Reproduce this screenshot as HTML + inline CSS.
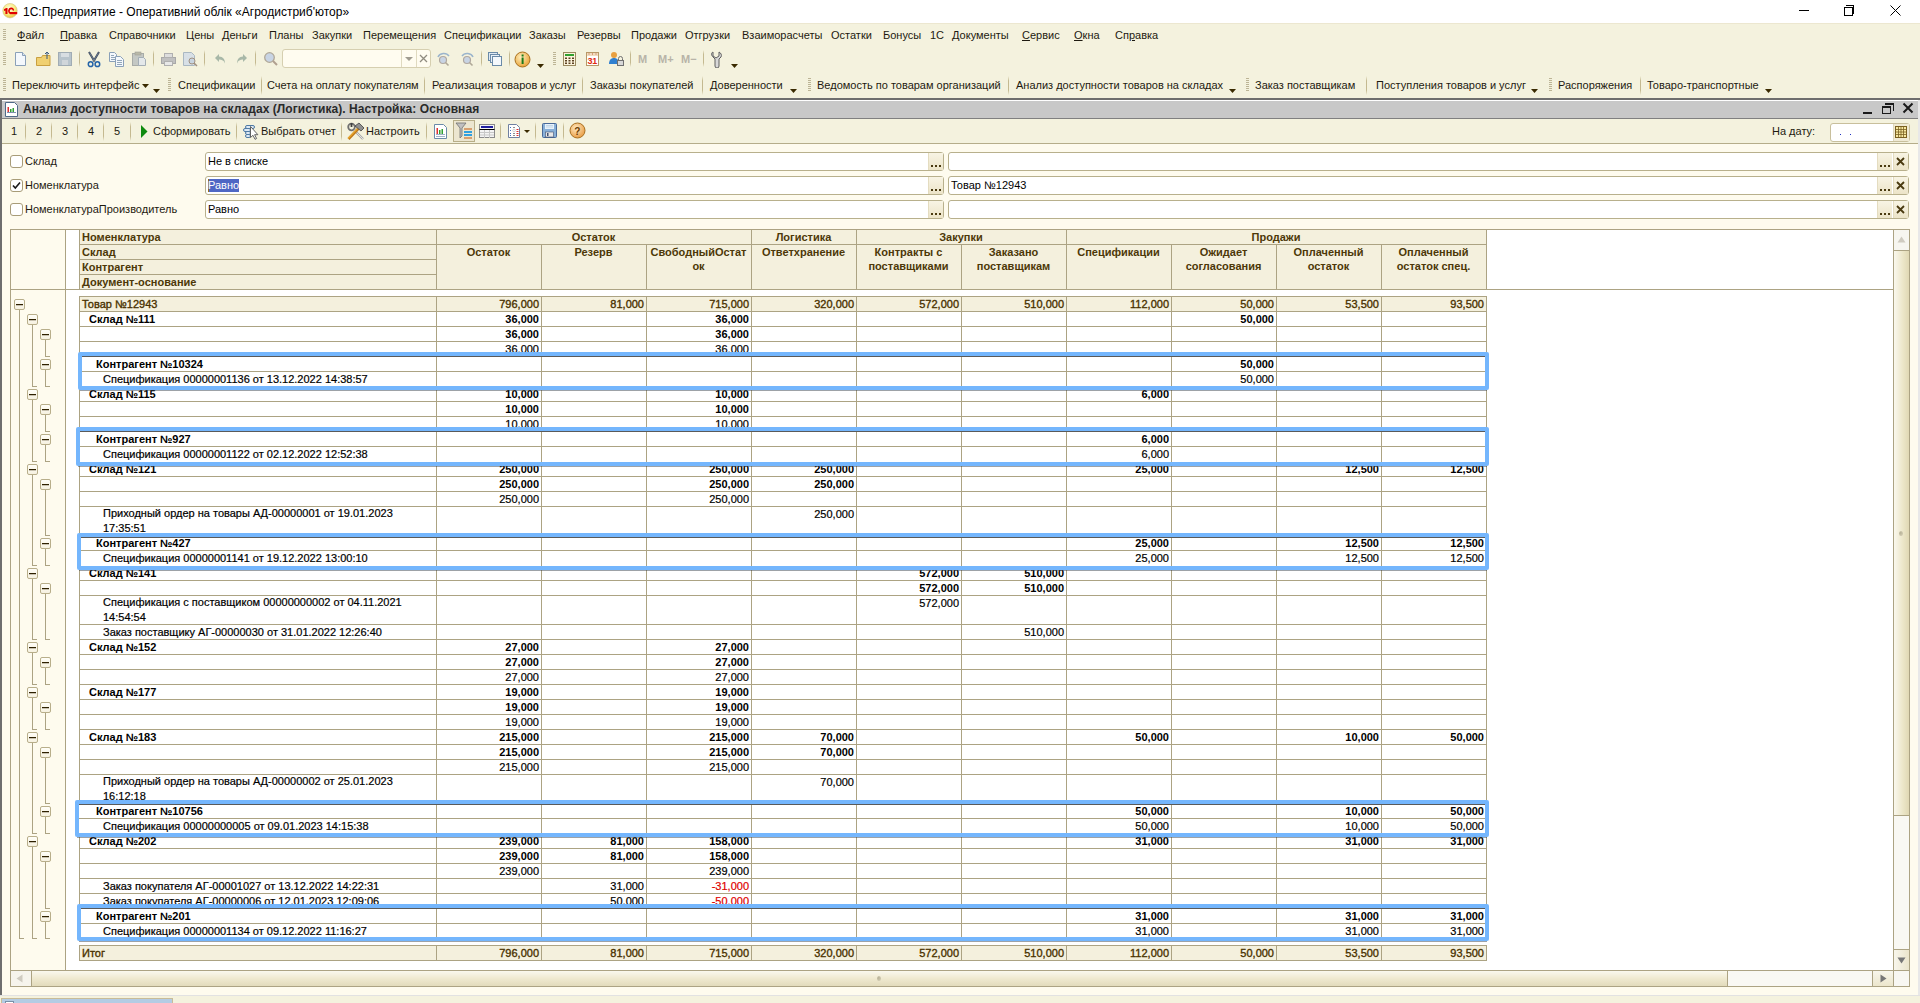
<!DOCTYPE html><html><head><meta charset="utf-8"><style>
*{margin:0;padding:0;box-sizing:border-box}
html,body{width:1920px;height:1003px;overflow:hidden;background:#f4f2de;font-family:"Liberation Sans",sans-serif;font-size:11px;color:#1a1a1a}
div,span,svg{position:absolute}
.t{white-space:nowrap;line-height:15px;height:15px}
.tb .t,.tb span{padding-top:1px}
.tb span:not([style*="bold"]){-webkit-text-stroke:0.2px currentColor}
.b{font-weight:bold}
.r{text-align:right}
.c{text-align:center}
</style></head><body>
<div style="left:0px;top:0px;width:1920px;height:23px;background:#fff"></div><svg style="left:0px;top:0px" width="20" height="20"><defs><radialGradient id="g1" cx="45%" cy="35%" r="65%"><stop offset="0" stop-color="#fffde8"/><stop offset="0.6" stop-color="#f8ec80"/><stop offset="1" stop-color="#e8c040"/></radialGradient></defs><circle cx="10" cy="10.7" r="7.2" fill="url(#g1)" stroke="#d8c890" stroke-width="0.7"/><path d="M4 9.2L6.2 8h1.3v6H5.4v-3.6l-1.4 0.6z" fill="#e00000"/><path d="M10 13.2C8.3 12.2 8.6 8.6 11 8.4c1.6-0.1 2.6 1 2.2 2.2" stroke="#e00000" stroke-width="1.7" fill="none"/><rect x="10" y="12" width="7.2" height="2.2" fill="#e00000"/></svg><span class="t" style="left:23px;top:5px;font-size:12px;color:#000">1С:Предприятие - Оперативний облік «Агродистриб'ютор»</span><div style="left:1799px;top:10px;width:10px;height:1px;background:#000"></div><div style="left:1844px;top:7px;width:9px;height:9px;border:1px solid #000;background:#fff"></div><div style="left:1846px;top:5px;width:8px;height:1px;background:#000"></div><div style="left:1853px;top:5px;width:1px;height:9px;background:#000"></div><svg style="left:1890px;top:5px" width="11" height="11"><path d="M0.5 0.5L10.5 10.5M10.5 0.5L0.5 10.5" stroke="#000" stroke-width="1"/></svg><div style="left:0px;top:23px;width:1920px;height:75px;background:#f4f2de"></div><div style="left:0px;top:23px;width:1920px;height:1px;background:#ece7d0"></div><div style="left:3px;top:29px;width:3px;height:1px;background:#bcb495"></div><div style="left:3px;top:31px;width:3px;height:1px;background:#bcb495"></div><div style="left:3px;top:33px;width:3px;height:1px;background:#bcb495"></div><div style="left:3px;top:35px;width:3px;height:1px;background:#bcb495"></div><div style="left:3px;top:37px;width:3px;height:1px;background:#bcb495"></div><div style="left:3px;top:39px;width:3px;height:1px;background:#bcb495"></div><span class="t" style="left:17px;top:28px;color:#1e1a10"><u>Ф</u>айл</span><span class="t" style="left:60px;top:28px;color:#1e1a10"><u>П</u>равка</span><span class="t" style="left:109px;top:28px;color:#1e1a10">Справочники</span><span class="t" style="left:186px;top:28px;color:#1e1a10">Цены</span><span class="t" style="left:222px;top:28px;color:#1e1a10">Деньги</span><span class="t" style="left:269px;top:28px;color:#1e1a10">Планы</span><span class="t" style="left:312px;top:28px;color:#1e1a10">Закупки</span><span class="t" style="left:363px;top:28px;color:#1e1a10">Перемещения</span><span class="t" style="left:444px;top:28px;color:#1e1a10">Спецификации</span><span class="t" style="left:529px;top:28px;color:#1e1a10">Заказы</span><span class="t" style="left:577px;top:28px;color:#1e1a10">Резервы</span><span class="t" style="left:631px;top:28px;color:#1e1a10">Продажи</span><span class="t" style="left:685px;top:28px;color:#1e1a10">Отгрузки</span><span class="t" style="left:742px;top:28px;color:#1e1a10">Взаиморасчеты</span><span class="t" style="left:831px;top:28px;color:#1e1a10">Остатки</span><span class="t" style="left:883px;top:28px;color:#1e1a10">Бонусы</span><span class="t" style="left:930px;top:28px;color:#1e1a10">1С</span><span class="t" style="left:952px;top:28px;color:#1e1a10">Документы</span><span class="t" style="left:1022px;top:28px;color:#1e1a10"><u>С</u>ервис</span><span class="t" style="left:1074px;top:28px;color:#1e1a10"><u>О</u>кна</span><span class="t" style="left:1115px;top:28px;color:#1e1a10">Сп<u>р</u>авка</span><div style="left:3px;top:52px;width:3px;height:1px;background:#bcb495"></div><div style="left:3px;top:54px;width:3px;height:1px;background:#bcb495"></div><div style="left:3px;top:56px;width:3px;height:1px;background:#bcb495"></div><div style="left:3px;top:58px;width:3px;height:1px;background:#bcb495"></div><div style="left:3px;top:60px;width:3px;height:1px;background:#bcb495"></div><div style="left:3px;top:62px;width:3px;height:1px;background:#bcb495"></div><div style="left:3px;top:64px;width:3px;height:1px;background:#bcb495"></div><svg style="left:13px;top:51px" width="16" height="16"><path d="M2.5 1.5h7l3 3v10h-10z" fill="#f4f8fc" stroke="#8aa0b8"/><path d="M9.5 1.5v3h3" fill="#dde6ef" stroke="#8aa0b8"/></svg><svg style="left:35px;top:51px" width="17" height="16"><path d="M1.5 6.5h5l1-2h7.5v10h-13.5z" fill="#f0d070" stroke="#c9a040"/><path d="M12 1v7M10 3l2-2 2 2" stroke="#3a5a80" fill="none"/></svg><svg style="left:57px;top:51px" width="16" height="16"><rect x="1.5" y="1.5" width="13" height="13" fill="#b8c4cc" stroke="#a0acb4"/><rect x="4" y="2" width="8" height="4" fill="#d8dee2"/><rect x="5" y="9" width="6" height="5" fill="#d0d6da"/></svg><div style="left:79px;top:50px;width:1px;height:17px;background:linear-gradient(180deg,rgba(190,180,140,0),#c4b990 25%,#c4b990 75%,rgba(190,180,140,0))"></div><svg style="left:87px;top:51px" width="14" height="17"><path d="M2 1l5.6 9.5M12 1L6.4 10.5" stroke="#3a4658" stroke-width="2"/><path d="M2.4 1.5l5 8.5M11.6 1.5l-5 8.5" stroke="#8aa0b8" stroke-width="0.6"/><ellipse cx="3.6" cy="13.2" rx="2.3" ry="2.4" fill="none" stroke="#2464a8" stroke-width="1.5"/><ellipse cx="10.4" cy="13.2" rx="2.3" ry="2.4" fill="none" stroke="#2464a8" stroke-width="1.5"/></svg><svg style="left:108px;top:51px" width="17" height="16"><path d="M1.5 1.5h5l2 2v7h-7z" fill="#f4f8fc" stroke="#8aa0b8"/><path d="M3 4.5h3M3 6.5h4M3 8.5h4" stroke="#7890a8" stroke-width="0.8"/><path d="M7.5 5.5h5l3 3v7h-8z" fill="#f4f8fc" stroke="#8aa0b8"/><path d="M9 9.5h5M9 11.5h5M9 13.5h5" stroke="#7890a8" stroke-width="0.8"/></svg><svg style="left:131px;top:51px" width="17" height="16"><rect x="1.5" y="2.5" width="11" height="12" fill="#c4c8c4" stroke="#a8aca8"/><rect x="4" y="1" width="6" height="3" fill="#b8b8a8" stroke="#a0a098" stroke-width="0.6"/><path d="M7.5 6.5h5l2 2v6h-7z" fill="#e4e8ea" stroke="#a4aeb6"/></svg><div style="left:153px;top:50px;width:1px;height:17px;background:linear-gradient(180deg,rgba(190,180,140,0),#c4b990 25%,#c4b990 75%,rgba(190,180,140,0))"></div><svg style="left:160px;top:51px" width="17" height="16"><rect x="1.5" y="6.5" width="14" height="6" fill="#c0c0c0" stroke="#a8a8a8"/><rect x="4.5" y="2.5" width="8" height="4" fill="#ddd" stroke="#b0b0b0"/><rect x="4.5" y="10.5" width="8" height="4" fill="#e8e8e8" stroke="#b0b0b0"/></svg><svg style="left:182px;top:51px" width="17" height="16"><path d="M1.5 1.5h8l3 3v10h-11z" fill="#d8e0e6" stroke="#aab8c2"/><circle cx="10" cy="10" r="3" fill="#c8d4e0" stroke="#a09080"/><path d="M12 12l3 3" stroke="#a09080" stroke-width="1.5"/></svg><div style="left:204px;top:50px;width:1px;height:17px;background:linear-gradient(180deg,rgba(190,180,140,0),#c4b990 25%,#c4b990 75%,rgba(190,180,140,0))"></div><svg style="left:214px;top:52px" width="13" height="13"><path d="M5 2L1 6l4 4V7.5c3 0 5 1 6 4 0-4-2-7-6-7z" fill="#a8b8a8"/></svg><svg style="left:235px;top:52px" width="13" height="13"><path d="M8 2l4 4-4 4V7.5c-3 0-5 1-6 4 0-4 2-7 6-7z" fill="#a8b8a8"/></svg><div style="left:255px;top:50px;width:1px;height:17px;background:linear-gradient(180deg,rgba(190,180,140,0),#c4b990 25%,#c4b990 75%,rgba(190,180,140,0))"></div><svg style="left:263px;top:51px" width="16" height="16"><circle cx="6.5" cy="6.5" r="4.8" fill="#c8d4e4" stroke="#b0a898" stroke-width="1.3"/><path d="M10 10l4 4" stroke="#b0a090" stroke-width="2"/></svg><div style="left:282px;top:49px;width:149px;height:19px;background:#fffcf0;border:1px solid #d6cfb0;border-radius:3px"></div><div style="left:401px;top:50px;width:1px;height:17px;background:#e0dac0"></div><div style="left:416px;top:50px;width:1px;height:17px;background:#e0dac0"></div><svg style="left:404px;top:56px" width="10" height="6"><path d="M1 1h8l-4 4z" fill="#a09c90"/></svg><svg style="left:419px;top:54px" width="9" height="9"><path d="M1 1l7 7M8 1L1 8" stroke="#908c80" stroke-width="1.3"/></svg><svg style="left:436px;top:51px" width="16" height="16"><path d="M2 6a6 5 0 0 1 11-1" stroke="#9ab4cc" stroke-width="1.5" fill="none"/><circle cx="7" cy="9" r="3.5" fill="#c8d4e4" stroke="#b0a8a0" stroke-width="1.2"/><path d="M9.5 11.5l3 3" stroke="#b0a898" stroke-width="1.6"/></svg><svg style="left:459px;top:51px" width="16" height="16"><path d="M3 5a6 5 0 0 1 11 1" stroke="#9ab4cc" stroke-width="1.5" fill="none"/><circle cx="8" cy="9" r="3.5" fill="#c8d4e4" stroke="#b0a8a0" stroke-width="1.2"/><path d="M10.5 11.5l3 3" stroke="#b0a898" stroke-width="1.6"/></svg><div style="left:481px;top:50px;width:1px;height:17px;background:linear-gradient(180deg,rgba(190,180,140,0),#c4b990 25%,#c4b990 75%,rgba(190,180,140,0))"></div><svg style="left:487px;top:51px" width="16" height="16"><rect x="1.5" y="1.5" width="9" height="8" fill="#dde8f2" stroke="#6a8aa8"/><rect x="3.5" y="3.5" width="9" height="8" fill="#e8f0f8" stroke="#6a8aa8"/><rect x="5.5" y="5.5" width="9" height="9" fill="#f4f8fc" stroke="#6a8aa8"/></svg><div style="left:509px;top:50px;width:1px;height:17px;background:linear-gradient(180deg,rgba(190,180,140,0),#c4b990 25%,#c4b990 75%,rgba(190,180,140,0))"></div><svg style="left:514px;top:51px" width="17" height="17"><defs><radialGradient id="gi" cx="40%" cy="35%" r="70%"><stop offset="0" stop-color="#fff0c0"/><stop offset="1" stop-color="#e8a030"/></radialGradient></defs><circle cx="8.5" cy="8.5" r="7.5" fill="url(#gi)" stroke="#a87020"/><rect x="7.6" y="6.5" width="2" height="6.5" fill="#1a7a1a"/><rect x="7.6" y="3.5" width="2" height="2" fill="#1a7a1a"/></svg><svg style="left:537px;top:64px" width="8" height="5"><path d="M0 0h7l-3.5 4z" fill="#3a2a00"/></svg><div style="left:553px;top:52px;width:3px;height:1px;background:#bcb495"></div><div style="left:553px;top:54px;width:3px;height:1px;background:#bcb495"></div><div style="left:553px;top:56px;width:3px;height:1px;background:#bcb495"></div><div style="left:553px;top:58px;width:3px;height:1px;background:#bcb495"></div><div style="left:553px;top:60px;width:3px;height:1px;background:#bcb495"></div><div style="left:553px;top:62px;width:3px;height:1px;background:#bcb495"></div><div style="left:553px;top:64px;width:3px;height:1px;background:#bcb495"></div><svg style="left:562px;top:51px" width="15" height="16"><rect x="1.5" y="1.5" width="12" height="13" fill="#fbf3dc" stroke="#9a8a60"/><rect x="3" y="3" width="9" height="2" fill="#30a030"/><g fill="#5a4020"><rect x="3" y="6.5" width="2" height="1.5"/><rect x="6.5" y="6.5" width="2" height="1.5"/><rect x="10" y="6.5" width="2" height="1.5"/><rect x="3" y="9" width="2" height="1.5"/><rect x="6.5" y="9" width="2" height="1.5"/><rect x="10" y="9" width="2" height="1.5"/><rect x="3" y="11.5" width="2" height="1.5"/><rect x="6.5" y="11.5" width="2" height="1.5"/><rect x="10" y="11.5" width="2" height="1.5"/></g></svg><svg style="left:585px;top:51px" width="15" height="16"><rect x="1.5" y="1.5" width="12" height="13" fill="#fff" stroke="#b89868"/><rect x="2" y="2" width="11" height="3" fill="#f0dcc0"/><g fill="#c06030"><rect x="3.5" y="2.5" width="1" height="1"/><rect x="7" y="2.5" width="1" height="1"/><rect x="10.5" y="2.5" width="1" height="1"/></g><text x="2.6" y="13.3" font-family="Liberation Sans" font-size="9" font-weight="bold" fill="#e02a10" letter-spacing="-0.3">31</text></svg><svg style="left:608px;top:51px" width="16" height="16"><circle cx="6" cy="4" r="3" fill="#e8a040"/><path d="M1 13c0-4 2-6 5-6s5 2 5 6z" fill="#3080d0"/><rect x="9.5" y="9.5" width="6" height="5" fill="#d8d8d8" stroke="#707070"/><path d="M10.5 9.5v-2a2 2 0 0 1 4 0v2" stroke="#707070" fill="none"/></svg><div style="left:630px;top:50px;width:1px;height:17px;background:linear-gradient(180deg,rgba(190,180,140,0),#c4b990 25%,#c4b990 75%,rgba(190,180,140,0))"></div><span class="t b" style="left:638px;top:52px;color:#b8b4a8;font-size:11px">M</span><span class="t b" style="left:658px;top:52px;color:#b8b4a8;font-size:11px">M+</span><span class="t b" style="left:681px;top:52px;color:#b8b4a8;font-size:11px">M−</span><div style="left:703px;top:50px;width:1px;height:17px;background:linear-gradient(180deg,rgba(190,180,140,0),#c4b990 25%,#c4b990 75%,rgba(190,180,140,0))"></div><svg style="left:710px;top:51px" width="12" height="17"><path d="M3 1v4l3 2 3-2V1c2 1 3 3 2 5l-2 2v7a2 2 0 0 1-4 0V8L3 6C1 4 1 2 3 1z" fill="#d8d8d8" stroke="#606060"/></svg><svg style="left:731px;top:64px" width="8" height="5"><path d="M0 0h7l-3.5 4z" fill="#3a2a00"/></svg><div style="left:3px;top:78px;width:3px;height:1px;background:#bcb495"></div><div style="left:3px;top:80px;width:3px;height:1px;background:#bcb495"></div><div style="left:3px;top:82px;width:3px;height:1px;background:#bcb495"></div><div style="left:3px;top:84px;width:3px;height:1px;background:#bcb495"></div><div style="left:3px;top:86px;width:3px;height:1px;background:#bcb495"></div><div style="left:3px;top:88px;width:3px;height:1px;background:#bcb495"></div><div style="left:3px;top:90px;width:3px;height:1px;background:#bcb495"></div><span class="t" style="left:12px;top:78px;color:#1e1a10">Переключить интерфейс</span><span class="t" style="left:178px;top:78px;color:#1e1a10">Спецификации</span><span class="t" style="left:267px;top:78px;color:#1e1a10">Счета на оплату покупателям</span><span class="t" style="left:432px;top:78px;color:#1e1a10">Реализация товаров и услуг</span><span class="t" style="left:590px;top:78px;color:#1e1a10">Заказы покупателей</span><span class="t" style="left:710px;top:78px;color:#1e1a10">Доверенности</span><span class="t" style="left:817px;top:78px;color:#1e1a10">Ведомость по товарам организаций</span><span class="t" style="left:1016px;top:78px;color:#1e1a10">Анализ доступности товаров на складах</span><span class="t" style="left:1255px;top:78px;color:#1e1a10">Заказ поставщикам</span><span class="t" style="left:1376px;top:78px;color:#1e1a10">Поступления товаров и услуг</span><span class="t" style="left:1558px;top:78px;color:#1e1a10">Распоряжения</span><span class="t" style="left:1647px;top:78px;color:#1e1a10">Товаро-транспортные</span><svg style="left:142px;top:84px" width="8" height="5"><path d="M0 0h7l-3.5 4z" fill="#3a2a00"/></svg><svg style="left:153px;top:89px" width="8" height="5"><path d="M0 0h7l-3.5 4z" fill="#3a2a00"/></svg><svg style="left:790px;top:89px" width="8" height="5"><path d="M0 0h7l-3.5 4z" fill="#3a2a00"/></svg><svg style="left:1229px;top:89px" width="8" height="5"><path d="M0 0h7l-3.5 4z" fill="#3a2a00"/></svg><svg style="left:1531px;top:89px" width="8" height="5"><path d="M0 0h7l-3.5 4z" fill="#3a2a00"/></svg><svg style="left:1765px;top:89px" width="8" height="5"><path d="M0 0h7l-3.5 4z" fill="#3a2a00"/></svg><div style="left:168px;top:78px;width:3px;height:1px;background:#bcb495"></div><div style="left:168px;top:80px;width:3px;height:1px;background:#bcb495"></div><div style="left:168px;top:82px;width:3px;height:1px;background:#bcb495"></div><div style="left:168px;top:84px;width:3px;height:1px;background:#bcb495"></div><div style="left:168px;top:86px;width:3px;height:1px;background:#bcb495"></div><div style="left:168px;top:88px;width:3px;height:1px;background:#bcb495"></div><div style="left:168px;top:90px;width:3px;height:1px;background:#bcb495"></div><div style="left:808px;top:78px;width:3px;height:1px;background:#bcb495"></div><div style="left:808px;top:80px;width:3px;height:1px;background:#bcb495"></div><div style="left:808px;top:82px;width:3px;height:1px;background:#bcb495"></div><div style="left:808px;top:84px;width:3px;height:1px;background:#bcb495"></div><div style="left:808px;top:86px;width:3px;height:1px;background:#bcb495"></div><div style="left:808px;top:88px;width:3px;height:1px;background:#bcb495"></div><div style="left:808px;top:90px;width:3px;height:1px;background:#bcb495"></div><div style="left:1246px;top:78px;width:3px;height:1px;background:#bcb495"></div><div style="left:1246px;top:80px;width:3px;height:1px;background:#bcb495"></div><div style="left:1246px;top:82px;width:3px;height:1px;background:#bcb495"></div><div style="left:1246px;top:84px;width:3px;height:1px;background:#bcb495"></div><div style="left:1246px;top:86px;width:3px;height:1px;background:#bcb495"></div><div style="left:1246px;top:88px;width:3px;height:1px;background:#bcb495"></div><div style="left:1246px;top:90px;width:3px;height:1px;background:#bcb495"></div><div style="left:1549px;top:78px;width:3px;height:1px;background:#bcb495"></div><div style="left:1549px;top:80px;width:3px;height:1px;background:#bcb495"></div><div style="left:1549px;top:82px;width:3px;height:1px;background:#bcb495"></div><div style="left:1549px;top:84px;width:3px;height:1px;background:#bcb495"></div><div style="left:1549px;top:86px;width:3px;height:1px;background:#bcb495"></div><div style="left:1549px;top:88px;width:3px;height:1px;background:#bcb495"></div><div style="left:1549px;top:90px;width:3px;height:1px;background:#bcb495"></div><div style="left:261px;top:76px;width:1px;height:19px;background:linear-gradient(180deg,rgba(190,180,140,0),#c4b990 25%,#c4b990 75%,rgba(190,180,140,0))"></div><div style="left:424px;top:76px;width:1px;height:19px;background:linear-gradient(180deg,rgba(190,180,140,0),#c4b990 25%,#c4b990 75%,rgba(190,180,140,0))"></div><div style="left:582px;top:76px;width:1px;height:19px;background:linear-gradient(180deg,rgba(190,180,140,0),#c4b990 25%,#c4b990 75%,rgba(190,180,140,0))"></div><div style="left:702px;top:76px;width:1px;height:19px;background:linear-gradient(180deg,rgba(190,180,140,0),#c4b990 25%,#c4b990 75%,rgba(190,180,140,0))"></div><div style="left:1008px;top:76px;width:1px;height:19px;background:linear-gradient(180deg,rgba(190,180,140,0),#c4b990 25%,#c4b990 75%,rgba(190,180,140,0))"></div><div style="left:1366px;top:76px;width:1px;height:19px;background:linear-gradient(180deg,rgba(190,180,140,0),#c4b990 25%,#c4b990 75%,rgba(190,180,140,0))"></div><div style="left:1640px;top:76px;width:1px;height:19px;background:linear-gradient(180deg,rgba(190,180,140,0),#c4b990 25%,#c4b990 75%,rgba(190,180,140,0))"></div><div style="left:0px;top:98px;width:1920px;height:905px;background:#fefbee"></div><div style="left:0px;top:98px;width:1920px;height:2px;background:#6e6e6e"></div><div style="left:0px;top:98px;width:2px;height:898px;background:#6e6e6e"></div><div style="left:2px;top:100px;width:1916px;height:1px;background:#fff"></div><div style="left:2px;top:101px;width:1916px;height:17px;background:#c8c8c8"></div><div style="left:2px;top:118px;width:1916px;height:1px;background:#808080"></div><div style="left:1918px;top:100px;width:2px;height:896px;background:#e8e8e8"></div><div style="left:0px;top:995px;width:1920px;height:1px;background:#e2e2e2"></div><div style="left:0px;top:996px;width:1920px;height:7px;background:#f4f2de"></div><div style="left:1px;top:998px;width:172px;height:5px;background:#b4cce4;border:1px solid #c8bc98;border-bottom:none"></div><div style="left:5px;top:1001px;width:9px;height:2px;background:#fff;border:1px solid #7890a8;border-bottom:none"></div><svg style="left:5px;top:102px" width="13" height="15"><path d="M0.5 0.5h9l3 3v11h-12z" fill="#fff" stroke="#506a88"/><rect x="2.5" y="5" width="1.5" height="5" fill="#e03030"/><rect x="5" y="7" width="1.5" height="3" fill="#30a030"/><rect x="7.5" y="6" width="1.5" height="4" fill="#30a030"/><path d="M2 10.5h9" stroke="#8090b0"/></svg><span class="t" style="left:23px;top:101px;font-size:12px;font-weight:bold;color:#2a2a2a;line-height:16px;height:16px;letter-spacing:0.07px">Анализ доступности товаров на складах (Логистика). Настройка: Основная</span><div style="left:1863px;top:112px;width:9px;height:2px;background:#1a1a1a"></div><div style="left:1882px;top:106px;width:9px;height:8px;border:1px solid #1a1a1a;border-top-width:2px;background:#c8c8c8"></div><div style="left:1885px;top:103px;width:9px;height:8px;border:1px solid #1a1a1a;border-top-width:2px;border-left:none;border-bottom:none"></div><svg style="left:1902px;top:102px" width="12" height="12"><path d="M1.5 1.5l9 9M10.5 1.5l-9 9" stroke="#1a1a1a" stroke-width="2"/></svg><div style="left:2px;top:119px;width:1916px;height:24px;background:#f4f2de"></div><div style="left:2px;top:143px;width:1916px;height:1px;background:#b5ad8a"></div><span class="t" style="left:11px;top:124px;color:#1e1a10">1</span><span class="t" style="left:36px;top:124px;color:#1e1a10">2</span><span class="t" style="left:62px;top:124px;color:#1e1a10">3</span><span class="t" style="left:88px;top:124px;color:#1e1a10">4</span><span class="t" style="left:114px;top:124px;color:#1e1a10">5</span><div style="left:25px;top:122px;width:1px;height:19px;background:linear-gradient(180deg,rgba(190,180,140,0),#c4b990 25%,#c4b990 75%,rgba(190,180,140,0))"></div><div style="left:51px;top:122px;width:1px;height:19px;background:linear-gradient(180deg,rgba(190,180,140,0),#c4b990 25%,#c4b990 75%,rgba(190,180,140,0))"></div><div style="left:77px;top:122px;width:1px;height:19px;background:linear-gradient(180deg,rgba(190,180,140,0),#c4b990 25%,#c4b990 75%,rgba(190,180,140,0))"></div><div style="left:103px;top:122px;width:1px;height:19px;background:linear-gradient(180deg,rgba(190,180,140,0),#c4b990 25%,#c4b990 75%,rgba(190,180,140,0))"></div><div style="left:130px;top:122px;width:1px;height:19px;background:linear-gradient(180deg,rgba(190,180,140,0),#c4b990 25%,#c4b990 75%,rgba(190,180,140,0))"></div><div style="left:236px;top:122px;width:1px;height:19px;background:linear-gradient(180deg,rgba(190,180,140,0),#c4b990 25%,#c4b990 75%,rgba(190,180,140,0))"></div><div style="left:341px;top:122px;width:1px;height:19px;background:linear-gradient(180deg,rgba(190,180,140,0),#c4b990 25%,#c4b990 75%,rgba(190,180,140,0))"></div><div style="left:426px;top:122px;width:1px;height:19px;background:linear-gradient(180deg,rgba(190,180,140,0),#c4b990 25%,#c4b990 75%,rgba(190,180,140,0))"></div><div style="left:500px;top:122px;width:1px;height:19px;background:linear-gradient(180deg,rgba(190,180,140,0),#c4b990 25%,#c4b990 75%,rgba(190,180,140,0))"></div><div style="left:535px;top:122px;width:1px;height:19px;background:linear-gradient(180deg,rgba(190,180,140,0),#c4b990 25%,#c4b990 75%,rgba(190,180,140,0))"></div><div style="left:563px;top:122px;width:1px;height:19px;background:linear-gradient(180deg,rgba(190,180,140,0),#c4b990 25%,#c4b990 75%,rgba(190,180,140,0))"></div><svg style="left:141px;top:125px" width="8" height="13"><path d="M0 0l6.5 6.5L0 13z" fill="#0e8a0e"/></svg><span class="t" style="left:153px;top:124px;color:#1e1a10">Сформировать</span><svg style="left:242px;top:124px" width="18" height="16"><g stroke="#4f7aa4" stroke-width="1" fill="#dce8f4"><rect x="3.5" y="1.5" width="9" height="3" rx="1.5"/><rect x="1.5" y="4.5" width="7" height="3" rx="1.5"/><rect x="3.5" y="7.5" width="5" height="3" rx="1.5"/><rect x="3.5" y="10.5" width="5" height="3" rx="1.5"/></g><path d="M8.5 2.5v11l2.5-2.2 2 4 1.6-0.8-2-3.8h3.3z" fill="#fff" stroke="#555" stroke-width="0.9"/></svg><span class="t" style="left:261px;top:124px;color:#1e1a10">Выбрать отчет</span><svg style="left:347px;top:122px" width="18" height="18"><circle cx="4.5" cy="5" r="3.3" fill="none" stroke="#707070" stroke-width="1.8"/><rect x="3.6" y="1" width="1.8" height="4" fill="#404040"/><path d="M7 8l9 9" stroke="#a8a8a8" stroke-width="2.4"/><path d="M7 8l9 9" stroke="#e8e8e8" stroke-width="0.9"/><path d="M1.5 17l10-10.5" stroke="#c07818" stroke-width="2.6"/><path d="M1 16.5l10-10.5" stroke="#e8a830" stroke-width="1.2"/><path d="M8 4l4-3 5 5-3 3z" fill="#909090" stroke="#404040" stroke-width="0.8"/></svg><span class="t" style="left:366px;top:124px;color:#1e1a10">Настроить</span><svg style="left:434px;top:124px" width="13" height="15"><path d="M0.5 0.5h9l3 3v11h-12z" fill="#fff" stroke="#6a8aa8"/><rect x="2.5" y="4" width="1.5" height="6" fill="#e03030"/><rect x="5" y="6" width="1.5" height="4" fill="#30a030"/><rect x="7.5" y="5" width="1.5" height="5" fill="#30a030"/><path d="M2 10.5h9M2 12.5h9" stroke="#a0b0c8"/></svg><div style="left:453px;top:120px;width:22px;height:22px;background:#ece6d0;border:1px solid #b8ae88"></div><svg style="left:455px;top:122px" width="18" height="18"><path d="M1 1h10l-4 5v8l-2 2V6z" fill="#c0c0c0" stroke="#707070" stroke-width="0.8"/><rect x="9" y="6" width="8" height="2" fill="#d8a070"/><rect x="9" y="9" width="8" height="2" fill="#30a0e0"/><rect x="9" y="12" width="8" height="2" fill="#30a0e0"/><rect x="9" y="15" width="8" height="2" fill="#d8a070"/></svg><svg style="left:479px;top:124px" width="17" height="15"><rect x="0.5" y="0.5" width="15" height="13" fill="#f4f4f4" stroke="#8a8a8a"/><rect x="2" y="2" width="12" height="2" fill="#2020a0"/><path d="M0.5 5.5h15" stroke="#000"/><path d="M1 8.5h14M1 11h14M5.5 6v8M10.5 6v8" stroke="#c8c8c8"/></svg><svg style="left:508px;top:124px" width="23" height="15"><path d="M0.5 0.5h8l3 3v10h-11z" fill="#fff" stroke="#7080a0"/><g fill="#4070c0"><rect x="2" y="3" width="1" height="1"/><rect x="2" y="6" width="1" height="1"/><rect x="2" y="9" width="1" height="1"/><rect x="2" y="11" width="1" height="1"/></g><g fill="#909090"><rect x="5" y="3" width="2" height="1"/><rect x="5" y="9" width="2" height="1"/><rect x="5" y="11" width="2" height="1"/></g><circle cx="6" cy="6.5" r="1.3" fill="none" stroke="#c0c0c0" stroke-width="0.7"/><g fill="#e03030"><rect x="8.5" y="5" width="2" height="1"/><rect x="8.5" y="7" width="2" height="1"/><rect x="8.5" y="9" width="2" height="1"/><rect x="8.5" y="11" width="2" height="1"/></g><path d="M16 6h6l-3 3z" fill="#3a2a00"/></svg><svg style="left:542px;top:123px" width="15" height="15"><rect x="0.5" y="0.5" width="14" height="14" rx="1" fill="#88b0d8" stroke="#4a6a98"/><rect x="3" y="1" width="9" height="5" fill="#e8f2fa"/><path d="M4 2.5h7M4 4h7" stroke="#a8c4de" stroke-width="0.6"/><rect x="3.5" y="9" width="8" height="5" fill="#e8e8e8" stroke="#405070" stroke-width="0.6"/><rect x="5" y="10" width="1.5" height="3" fill="#405070"/></svg><svg style="left:569px;top:122px" width="17" height="17"><defs><radialGradient id="gh" cx="40%" cy="35%" r="70%"><stop offset="0" stop-color="#ffe8c0"/><stop offset="1" stop-color="#e89a40"/></radialGradient></defs><circle cx="8.5" cy="8.5" r="7.5" fill="url(#gh)" stroke="#a87020"/><text x="5.2" y="12.6" font-family="Liberation Sans" font-weight="bold" font-size="10" fill="#6a3a00">?</text></svg><span class="t" style="left:1772px;top:124px;color:#1e1a10">На дату:</span><div style="left:1830px;top:123px;width:80px;height:19px;background:#fff;border:1px solid #c8bf9c;border-radius:3px"></div><div style="left:1893px;top:124px;width:16px;height:17px;background:#f0ead4;border-left:1px solid #e0d8bc"></div><svg style="left:1895px;top:126px" width="12" height="12"><rect x="0.5" y="0.5" width="11" height="11" fill="#f8e8a0" stroke="#7a6020"/><path d="M0.5 3.5h11M0.5 6h11M0.5 8.5h11M3.5 1v11M6 1v11M8.5 1v11" stroke="#7a6020" stroke-width="0.8"/></svg><div style="left:1840px;top:134px;width:1px;height:1px;background:#2030c0"></div><div style="left:1850px;top:134px;width:1px;height:1px;background:#2030c0"></div><div style="left:10px;top:155px;width:13px;height:13px;background:#fff;border:1px solid #a89c78;border-radius:3px"></div><span class="t" style="left:25px;top:154px;color:#1e1a10">Склад</span><div style="left:205px;top:152px;width:739px;height:19px;background:#fff;border:1px solid #b8b08c;border-radius:3px"></div><div style="left:928px;top:153px;width:15px;height:17px;background:linear-gradient(180deg,#f8f4e4,#ece4c8);border-left:1px solid #e4dcc0"></div><div style="left:931px;top:165px;width:2px;height:2px;background:#4a3a10"></div><div style="left:935px;top:165px;width:2px;height:2px;background:#4a3a10"></div><div style="left:939px;top:165px;width:2px;height:2px;background:#4a3a10"></div><div style="left:948px;top:152px;width:961px;height:19px;background:#fff;border:1px solid #b8b08c;border-radius:3px"></div><div style="left:1893px;top:153px;width:15px;height:17px;background:linear-gradient(180deg,#f8f4e4,#ece4c8);border-left:1px solid #e4dcc0"></div><svg style="left:1896px;top:157px" width="9" height="9"><path d="M1 1l7 7M8 1L1 8" stroke="#4a3a10" stroke-width="1.8"/></svg><div style="left:1877px;top:153px;width:15px;height:17px;background:linear-gradient(180deg,#f8f4e4,#ece4c8);border-left:1px solid #e4dcc0"></div><div style="left:1880px;top:165px;width:2px;height:2px;background:#4a3a10"></div><div style="left:1884px;top:165px;width:2px;height:2px;background:#4a3a10"></div><div style="left:1888px;top:165px;width:2px;height:2px;background:#4a3a10"></div><span class="t" style="left:208px;top:154px;color:#000">Не в списке</span><div style="left:10px;top:179px;width:13px;height:13px;background:#fff;border:1px solid #a89c78;border-radius:3px"></div><svg style="left:12px;top:181px" width="9" height="9"><path d="M1 4.5l2.3 2.5L8 1.5" stroke="#1a1a1a" stroke-width="1.6" fill="none"/></svg><span class="t" style="left:25px;top:178px;color:#1e1a10">Номенклатура</span><div style="left:205px;top:176px;width:739px;height:19px;background:#fff;border:1px solid #b8b08c;border-radius:3px"></div><div style="left:928px;top:177px;width:15px;height:17px;background:linear-gradient(180deg,#f8f4e4,#ece4c8);border-left:1px solid #e4dcc0"></div><div style="left:931px;top:189px;width:2px;height:2px;background:#4a3a10"></div><div style="left:935px;top:189px;width:2px;height:2px;background:#4a3a10"></div><div style="left:939px;top:189px;width:2px;height:2px;background:#4a3a10"></div><div style="left:948px;top:176px;width:961px;height:19px;background:#fff;border:1px solid #b8b08c;border-radius:3px"></div><div style="left:1893px;top:177px;width:15px;height:17px;background:linear-gradient(180deg,#f8f4e4,#ece4c8);border-left:1px solid #e4dcc0"></div><svg style="left:1896px;top:181px" width="9" height="9"><path d="M1 1l7 7M8 1L1 8" stroke="#4a3a10" stroke-width="1.8"/></svg><div style="left:1877px;top:177px;width:15px;height:17px;background:linear-gradient(180deg,#f8f4e4,#ece4c8);border-left:1px solid #e4dcc0"></div><div style="left:1880px;top:189px;width:2px;height:2px;background:#4a3a10"></div><div style="left:1884px;top:189px;width:2px;height:2px;background:#4a3a10"></div><div style="left:1888px;top:189px;width:2px;height:2px;background:#4a3a10"></div><div style="left:208px;top:179px;width:31px;height:13px;background:#4f67c4"></div><div style="left:208px;top:179px;width:1px;height:13px;background:#9a7018"></div><span class="t" style="left:208px;top:178px;color:#fff">Равно</span><span class="t" style="left:951px;top:178px;color:#000">Товар №12943</span><div style="left:10px;top:203px;width:13px;height:13px;background:#fff;border:1px solid #a89c78;border-radius:3px"></div><span class="t" style="left:25px;top:202px;color:#1e1a10">НоменклатураПроизводитель</span><div style="left:205px;top:200px;width:739px;height:19px;background:#fff;border:1px solid #b8b08c;border-radius:3px"></div><div style="left:928px;top:201px;width:15px;height:17px;background:linear-gradient(180deg,#f8f4e4,#ece4c8);border-left:1px solid #e4dcc0"></div><div style="left:931px;top:213px;width:2px;height:2px;background:#4a3a10"></div><div style="left:935px;top:213px;width:2px;height:2px;background:#4a3a10"></div><div style="left:939px;top:213px;width:2px;height:2px;background:#4a3a10"></div><div style="left:948px;top:200px;width:961px;height:19px;background:#fff;border:1px solid #b8b08c;border-radius:3px"></div><div style="left:1893px;top:201px;width:15px;height:17px;background:linear-gradient(180deg,#f8f4e4,#ece4c8);border-left:1px solid #e4dcc0"></div><svg style="left:1896px;top:205px" width="9" height="9"><path d="M1 1l7 7M8 1L1 8" stroke="#4a3a10" stroke-width="1.8"/></svg><div style="left:1877px;top:201px;width:15px;height:17px;background:linear-gradient(180deg,#f8f4e4,#ece4c8);border-left:1px solid #e4dcc0"></div><div style="left:1880px;top:213px;width:2px;height:2px;background:#4a3a10"></div><div style="left:1884px;top:213px;width:2px;height:2px;background:#4a3a10"></div><div style="left:1888px;top:213px;width:2px;height:2px;background:#4a3a10"></div><span class="t" style="left:208px;top:202px;color:#000">Равно</span><div class="tb" style="left:0;top:0;width:1920px;height:1003px"><div style="left:10px;top:229px;width:1900px;height:758px;background:#fff;border:1px solid #aca383"></div><div style="left:11px;top:230px;width:55px;height:740px;background:#fefbee"></div><div style="left:65px;top:229px;width:1px;height:741px;background:#aca383"></div><div style="left:1893px;top:229px;width:17px;height:742px;background:#f9f8f3;border-left:1px solid #aca383;border-right:1px solid #aca383"></div><div style="left:1893px;top:250px;width:17px;height:566px;background:linear-gradient(90deg,#faf8ee,#ece6c8 60%,#e0d8b4);border:1px solid #aca383"></div><div style="left:1899px;top:531px;width:4px;height:5px;background:radial-gradient(circle at 30% 35%,#b8b298,#d8d2b8);border-radius:50%"></div><div style="left:1893px;top:229px;width:17px;height:22px;background:#f7f6f0;border:1px solid #aca383"></div><svg style="left:1897px;top:236px" width="9" height="7"><path d="M4.5 0.5L8.5 6.5H0.5z" fill="#cfcbc0"/></svg><div style="left:1893px;top:949px;width:17px;height:22px;background:linear-gradient(90deg,#f8f6ec,#ebe5cc);border:1px solid #aca383"></div><svg style="left:1897px;top:957px" width="9" height="7"><path d="M0.5 0.5H8.5L4.5 6.5z" fill="#777"/></svg><div style="left:10px;top:970px;width:1883px;height:17px;background:#f9f8f3;border:1px solid #aca383"></div><div style="left:31px;top:970px;width:1697px;height:17px;background:linear-gradient(180deg,#faf8ee,#efe9d0 50%,#e2dbbb);border:1px solid #aca383"></div><div style="left:877px;top:976px;width:4px;height:5px;background:radial-gradient(circle at 30% 35%,#b8b298,#d8d2b8);border-radius:50%"></div><div style="left:10px;top:970px;width:22px;height:17px;background:#f6f4ec;border:1px solid #aca383"></div><svg style="left:16px;top:974px" width="7" height="9"><path d="M6.5 0.5V8.5L0.5 4.5z" fill="#cfcbc0"/></svg><div style="left:1872px;top:970px;width:22px;height:17px;background:linear-gradient(180deg,#f8f6ec,#ece6cc);border:1px solid #aca383"></div><svg style="left:1880px;top:974px" width="7" height="9"><path d="M0.5 0.5V8.5L6.5 4.5z" fill="#777"/></svg><div style="left:1893px;top:970px;width:17px;height:17px;background:#f8f7f2;border:1px solid #aca383"></div><div style="left:79px;top:229px;width:1408px;height:61px;background:#f4f0dd"></div><div style="left:66px;top:230px;width:13px;height:60px;background:#fff"></div><div style="left:79px;top:229px;width:1408px;height:1px;background:#aca383"></div><div style="left:10px;top:289px;width:1884px;height:1px;background:#aca383"></div><div style="left:436px;top:244px;width:1051px;height:1px;background:#aca383"></div><div style="left:79px;top:244px;width:358px;height:1px;background:#aca383"></div><div style="left:79px;top:259px;width:358px;height:1px;background:#aca383"></div><div style="left:79px;top:274px;width:358px;height:1px;background:#aca383"></div><div style="left:79px;top:229px;width:1px;height:61px;background:#aca383"></div><div style="left:1486px;top:229px;width:1px;height:61px;background:#aca383"></div><div style="left:436px;top:229px;width:1px;height:61px;background:#aca383"></div><div style="left:751px;top:229px;width:1px;height:61px;background:#aca383"></div><div style="left:856px;top:229px;width:1px;height:61px;background:#aca383"></div><div style="left:1066px;top:229px;width:1px;height:61px;background:#aca383"></div><div style="left:541px;top:244px;width:1px;height:46px;background:#aca383"></div><div style="left:646px;top:244px;width:1px;height:46px;background:#aca383"></div><div style="left:961px;top:244px;width:1px;height:46px;background:#aca383"></div><div style="left:1171px;top:244px;width:1px;height:46px;background:#aca383"></div><div style="left:1276px;top:244px;width:1px;height:46px;background:#aca383"></div><div style="left:1381px;top:244px;width:1px;height:46px;background:#aca383"></div><span class="t" style="left:82px;top:229px;font-weight:bold;color:#4d3808">Номенклатура</span><span class="t" style="left:82px;top:244px;font-weight:bold;color:#4d3808">Склад</span><span class="t" style="left:82px;top:259px;font-weight:bold;color:#4d3808">Контрагент</span><span class="t" style="left:82px;top:274px;font-weight:bold;color:#4d3808">Документ-основание</span><span class="t c" style="left:436px;top:229px;width:315px;font-weight:bold;color:#4d3808">Остаток</span><span class="t c" style="left:751px;top:229px;width:105px;font-weight:bold;color:#4d3808">Логистика</span><span class="t c" style="left:856px;top:229px;width:210px;font-weight:bold;color:#4d3808">Закупки</span><span class="t c" style="left:1066px;top:229px;width:420px;font-weight:bold;color:#4d3808">Продажи</span><span class="c" style="left:436px;top:244px;width:105px;line-height:14px;font-weight:bold;color:#4d3808;white-space:nowrap">Остаток</span><span class="c" style="left:541px;top:244px;width:105px;line-height:14px;font-weight:bold;color:#4d3808;white-space:nowrap">Резерв</span><span class="c" style="left:646px;top:244px;width:105px;line-height:14px;font-weight:bold;color:#4d3808;white-space:nowrap">СвободныйОстат<br>ок</span><span class="c" style="left:751px;top:244px;width:105px;line-height:14px;font-weight:bold;color:#4d3808;white-space:nowrap">Ответхранение</span><span class="c" style="left:856px;top:244px;width:105px;line-height:14px;font-weight:bold;color:#4d3808;white-space:nowrap">Контракты с<br>поставщиками</span><span class="c" style="left:961px;top:244px;width:105px;line-height:14px;font-weight:bold;color:#4d3808;white-space:nowrap">Заказано<br>поставщикам</span><span class="c" style="left:1066px;top:244px;width:105px;line-height:14px;font-weight:bold;color:#4d3808;white-space:nowrap">Спецификации</span><span class="c" style="left:1171px;top:244px;width:105px;line-height:14px;font-weight:bold;color:#4d3808;white-space:nowrap">Ожидает<br>согласования</span><span class="c" style="left:1276px;top:244px;width:105px;line-height:14px;font-weight:bold;color:#4d3808;white-space:nowrap">Оплаченный<br>остаток</span><span class="c" style="left:1381px;top:244px;width:105px;line-height:14px;font-weight:bold;color:#4d3808;white-space:nowrap">Оплаченный<br>остаток спец.</span><div style="left:79px;top:296px;width:1408px;height:16px;background:#f4f0dd"></div><div style="left:79px;top:296px;width:1408px;height:1px;background:#aca383"></div><div style="left:79px;top:311px;width:1408px;height:1px;background:#aca383"></div><div style="left:79px;top:296px;width:1px;height:16px;background:#aca383"></div><div style="left:436px;top:296px;width:1px;height:16px;background:#aca383"></div><div style="left:541px;top:296px;width:1px;height:16px;background:#aca383"></div><div style="left:646px;top:296px;width:1px;height:16px;background:#aca383"></div><div style="left:751px;top:296px;width:1px;height:16px;background:#aca383"></div><div style="left:856px;top:296px;width:1px;height:16px;background:#aca383"></div><div style="left:961px;top:296px;width:1px;height:16px;background:#aca383"></div><div style="left:1066px;top:296px;width:1px;height:16px;background:#aca383"></div><div style="left:1171px;top:296px;width:1px;height:16px;background:#aca383"></div><div style="left:1276px;top:296px;width:1px;height:16px;background:#aca383"></div><div style="left:1381px;top:296px;width:1px;height:16px;background:#aca383"></div><div style="left:1486px;top:296px;width:1px;height:16px;background:#aca383"></div><span class="t" style="left:82px;top:296px;color:#4a3200;-webkit-text-stroke:0.35px #4a3200;">Товар №12943</span><span class="t r" style="left:436px;top:296px;width:103px;color:#4a3200;-webkit-text-stroke:0.35px #4a3200;">796,000</span><span class="t r" style="left:541px;top:296px;width:103px;color:#4a3200;-webkit-text-stroke:0.35px #4a3200;">81,000</span><span class="t r" style="left:646px;top:296px;width:103px;color:#4a3200;-webkit-text-stroke:0.35px #4a3200;">715,000</span><span class="t r" style="left:751px;top:296px;width:103px;color:#4a3200;-webkit-text-stroke:0.35px #4a3200;">320,000</span><span class="t r" style="left:856px;top:296px;width:103px;color:#4a3200;-webkit-text-stroke:0.35px #4a3200;">572,000</span><span class="t r" style="left:961px;top:296px;width:103px;color:#4a3200;-webkit-text-stroke:0.35px #4a3200;">510,000</span><span class="t r" style="left:1066px;top:296px;width:103px;color:#4a3200;-webkit-text-stroke:0.35px #4a3200;">112,000</span><span class="t r" style="left:1171px;top:296px;width:103px;color:#4a3200;-webkit-text-stroke:0.35px #4a3200;">50,000</span><span class="t r" style="left:1276px;top:296px;width:103px;color:#4a3200;-webkit-text-stroke:0.35px #4a3200;">53,500</span><span class="t r" style="left:1381px;top:296px;width:103px;color:#4a3200;-webkit-text-stroke:0.35px #4a3200;">93,500</span><div style="left:79px;top:311px;width:1408px;height:16px;background:#fff"></div><div style="left:79px;top:311px;width:1408px;height:1px;background:#aca383"></div><div style="left:79px;top:326px;width:1408px;height:1px;background:#aca383"></div><div style="left:79px;top:311px;width:1px;height:16px;background:#aca383"></div><div style="left:436px;top:311px;width:1px;height:16px;background:#aca383"></div><div style="left:541px;top:311px;width:1px;height:16px;background:#aca383"></div><div style="left:646px;top:311px;width:1px;height:16px;background:#aca383"></div><div style="left:751px;top:311px;width:1px;height:16px;background:#aca383"></div><div style="left:856px;top:311px;width:1px;height:16px;background:#aca383"></div><div style="left:961px;top:311px;width:1px;height:16px;background:#aca383"></div><div style="left:1066px;top:311px;width:1px;height:16px;background:#aca383"></div><div style="left:1171px;top:311px;width:1px;height:16px;background:#aca383"></div><div style="left:1276px;top:311px;width:1px;height:16px;background:#aca383"></div><div style="left:1381px;top:311px;width:1px;height:16px;background:#aca383"></div><div style="left:1486px;top:311px;width:1px;height:16px;background:#aca383"></div><span class="t" style="left:89px;top:311px;font-weight:bold;color:#000;">Склад №111</span><span class="t r" style="left:436px;top:311px;width:103px;font-weight:bold;color:#000;">36,000</span><span class="t r" style="left:646px;top:311px;width:103px;font-weight:bold;color:#000;">36,000</span><span class="t r" style="left:1171px;top:311px;width:103px;font-weight:bold;color:#000;">50,000</span><div style="left:79px;top:326px;width:1408px;height:16px;background:#fff"></div><div style="left:79px;top:326px;width:1408px;height:1px;background:#aca383"></div><div style="left:79px;top:341px;width:1408px;height:1px;background:#aca383"></div><div style="left:79px;top:326px;width:1px;height:16px;background:#aca383"></div><div style="left:436px;top:326px;width:1px;height:16px;background:#aca383"></div><div style="left:541px;top:326px;width:1px;height:16px;background:#aca383"></div><div style="left:646px;top:326px;width:1px;height:16px;background:#aca383"></div><div style="left:751px;top:326px;width:1px;height:16px;background:#aca383"></div><div style="left:856px;top:326px;width:1px;height:16px;background:#aca383"></div><div style="left:961px;top:326px;width:1px;height:16px;background:#aca383"></div><div style="left:1066px;top:326px;width:1px;height:16px;background:#aca383"></div><div style="left:1171px;top:326px;width:1px;height:16px;background:#aca383"></div><div style="left:1276px;top:326px;width:1px;height:16px;background:#aca383"></div><div style="left:1381px;top:326px;width:1px;height:16px;background:#aca383"></div><div style="left:1486px;top:326px;width:1px;height:16px;background:#aca383"></div><span class="t r" style="left:436px;top:326px;width:103px;font-weight:bold;color:#000;">36,000</span><span class="t r" style="left:646px;top:326px;width:103px;font-weight:bold;color:#000;">36,000</span><div style="left:79px;top:341px;width:1408px;height:16px;background:#fff"></div><div style="left:79px;top:341px;width:1408px;height:1px;background:#aca383"></div><div style="left:79px;top:356px;width:1408px;height:1px;background:#aca383"></div><div style="left:79px;top:341px;width:1px;height:16px;background:#aca383"></div><div style="left:436px;top:341px;width:1px;height:16px;background:#aca383"></div><div style="left:541px;top:341px;width:1px;height:16px;background:#aca383"></div><div style="left:646px;top:341px;width:1px;height:16px;background:#aca383"></div><div style="left:751px;top:341px;width:1px;height:16px;background:#aca383"></div><div style="left:856px;top:341px;width:1px;height:16px;background:#aca383"></div><div style="left:961px;top:341px;width:1px;height:16px;background:#aca383"></div><div style="left:1066px;top:341px;width:1px;height:16px;background:#aca383"></div><div style="left:1171px;top:341px;width:1px;height:16px;background:#aca383"></div><div style="left:1276px;top:341px;width:1px;height:16px;background:#aca383"></div><div style="left:1381px;top:341px;width:1px;height:16px;background:#aca383"></div><div style="left:1486px;top:341px;width:1px;height:16px;background:#aca383"></div><span class="t r" style="left:436px;top:341px;width:103px;color:#000;">36,000</span><span class="t r" style="left:646px;top:341px;width:103px;color:#000;">36,000</span><div style="left:79px;top:386px;width:1408px;height:16px;background:#fff"></div><div style="left:79px;top:386px;width:1408px;height:1px;background:#aca383"></div><div style="left:79px;top:401px;width:1408px;height:1px;background:#aca383"></div><div style="left:79px;top:386px;width:1px;height:16px;background:#aca383"></div><div style="left:436px;top:386px;width:1px;height:16px;background:#aca383"></div><div style="left:541px;top:386px;width:1px;height:16px;background:#aca383"></div><div style="left:646px;top:386px;width:1px;height:16px;background:#aca383"></div><div style="left:751px;top:386px;width:1px;height:16px;background:#aca383"></div><div style="left:856px;top:386px;width:1px;height:16px;background:#aca383"></div><div style="left:961px;top:386px;width:1px;height:16px;background:#aca383"></div><div style="left:1066px;top:386px;width:1px;height:16px;background:#aca383"></div><div style="left:1171px;top:386px;width:1px;height:16px;background:#aca383"></div><div style="left:1276px;top:386px;width:1px;height:16px;background:#aca383"></div><div style="left:1381px;top:386px;width:1px;height:16px;background:#aca383"></div><div style="left:1486px;top:386px;width:1px;height:16px;background:#aca383"></div><span class="t" style="left:89px;top:386px;font-weight:bold;color:#000;">Склад №115</span><span class="t r" style="left:436px;top:386px;width:103px;font-weight:bold;color:#000;">10,000</span><span class="t r" style="left:646px;top:386px;width:103px;font-weight:bold;color:#000;">10,000</span><span class="t r" style="left:1066px;top:386px;width:103px;font-weight:bold;color:#000;">6,000</span><div style="left:79px;top:401px;width:1408px;height:16px;background:#fff"></div><div style="left:79px;top:401px;width:1408px;height:1px;background:#aca383"></div><div style="left:79px;top:416px;width:1408px;height:1px;background:#aca383"></div><div style="left:79px;top:401px;width:1px;height:16px;background:#aca383"></div><div style="left:436px;top:401px;width:1px;height:16px;background:#aca383"></div><div style="left:541px;top:401px;width:1px;height:16px;background:#aca383"></div><div style="left:646px;top:401px;width:1px;height:16px;background:#aca383"></div><div style="left:751px;top:401px;width:1px;height:16px;background:#aca383"></div><div style="left:856px;top:401px;width:1px;height:16px;background:#aca383"></div><div style="left:961px;top:401px;width:1px;height:16px;background:#aca383"></div><div style="left:1066px;top:401px;width:1px;height:16px;background:#aca383"></div><div style="left:1171px;top:401px;width:1px;height:16px;background:#aca383"></div><div style="left:1276px;top:401px;width:1px;height:16px;background:#aca383"></div><div style="left:1381px;top:401px;width:1px;height:16px;background:#aca383"></div><div style="left:1486px;top:401px;width:1px;height:16px;background:#aca383"></div><span class="t r" style="left:436px;top:401px;width:103px;font-weight:bold;color:#000;">10,000</span><span class="t r" style="left:646px;top:401px;width:103px;font-weight:bold;color:#000;">10,000</span><div style="left:79px;top:416px;width:1408px;height:16px;background:#fff"></div><div style="left:79px;top:416px;width:1408px;height:1px;background:#aca383"></div><div style="left:79px;top:431px;width:1408px;height:1px;background:#aca383"></div><div style="left:79px;top:416px;width:1px;height:16px;background:#aca383"></div><div style="left:436px;top:416px;width:1px;height:16px;background:#aca383"></div><div style="left:541px;top:416px;width:1px;height:16px;background:#aca383"></div><div style="left:646px;top:416px;width:1px;height:16px;background:#aca383"></div><div style="left:751px;top:416px;width:1px;height:16px;background:#aca383"></div><div style="left:856px;top:416px;width:1px;height:16px;background:#aca383"></div><div style="left:961px;top:416px;width:1px;height:16px;background:#aca383"></div><div style="left:1066px;top:416px;width:1px;height:16px;background:#aca383"></div><div style="left:1171px;top:416px;width:1px;height:16px;background:#aca383"></div><div style="left:1276px;top:416px;width:1px;height:16px;background:#aca383"></div><div style="left:1381px;top:416px;width:1px;height:16px;background:#aca383"></div><div style="left:1486px;top:416px;width:1px;height:16px;background:#aca383"></div><span class="t r" style="left:436px;top:416px;width:103px;color:#000;">10,000</span><span class="t r" style="left:646px;top:416px;width:103px;color:#000;">10,000</span><div style="left:79px;top:461px;width:1408px;height:16px;background:#fff"></div><div style="left:79px;top:461px;width:1408px;height:1px;background:#aca383"></div><div style="left:79px;top:476px;width:1408px;height:1px;background:#aca383"></div><div style="left:79px;top:461px;width:1px;height:16px;background:#aca383"></div><div style="left:436px;top:461px;width:1px;height:16px;background:#aca383"></div><div style="left:541px;top:461px;width:1px;height:16px;background:#aca383"></div><div style="left:646px;top:461px;width:1px;height:16px;background:#aca383"></div><div style="left:751px;top:461px;width:1px;height:16px;background:#aca383"></div><div style="left:856px;top:461px;width:1px;height:16px;background:#aca383"></div><div style="left:961px;top:461px;width:1px;height:16px;background:#aca383"></div><div style="left:1066px;top:461px;width:1px;height:16px;background:#aca383"></div><div style="left:1171px;top:461px;width:1px;height:16px;background:#aca383"></div><div style="left:1276px;top:461px;width:1px;height:16px;background:#aca383"></div><div style="left:1381px;top:461px;width:1px;height:16px;background:#aca383"></div><div style="left:1486px;top:461px;width:1px;height:16px;background:#aca383"></div><span class="t" style="left:89px;top:461px;font-weight:bold;color:#000;">Склад №121</span><span class="t r" style="left:436px;top:461px;width:103px;font-weight:bold;color:#000;">250,000</span><span class="t r" style="left:646px;top:461px;width:103px;font-weight:bold;color:#000;">250,000</span><span class="t r" style="left:751px;top:461px;width:103px;font-weight:bold;color:#000;">250,000</span><span class="t r" style="left:1066px;top:461px;width:103px;font-weight:bold;color:#000;">25,000</span><span class="t r" style="left:1276px;top:461px;width:103px;font-weight:bold;color:#000;">12,500</span><span class="t r" style="left:1381px;top:461px;width:103px;font-weight:bold;color:#000;">12,500</span><div style="left:79px;top:476px;width:1408px;height:16px;background:#fff"></div><div style="left:79px;top:476px;width:1408px;height:1px;background:#aca383"></div><div style="left:79px;top:491px;width:1408px;height:1px;background:#aca383"></div><div style="left:79px;top:476px;width:1px;height:16px;background:#aca383"></div><div style="left:436px;top:476px;width:1px;height:16px;background:#aca383"></div><div style="left:541px;top:476px;width:1px;height:16px;background:#aca383"></div><div style="left:646px;top:476px;width:1px;height:16px;background:#aca383"></div><div style="left:751px;top:476px;width:1px;height:16px;background:#aca383"></div><div style="left:856px;top:476px;width:1px;height:16px;background:#aca383"></div><div style="left:961px;top:476px;width:1px;height:16px;background:#aca383"></div><div style="left:1066px;top:476px;width:1px;height:16px;background:#aca383"></div><div style="left:1171px;top:476px;width:1px;height:16px;background:#aca383"></div><div style="left:1276px;top:476px;width:1px;height:16px;background:#aca383"></div><div style="left:1381px;top:476px;width:1px;height:16px;background:#aca383"></div><div style="left:1486px;top:476px;width:1px;height:16px;background:#aca383"></div><span class="t r" style="left:436px;top:476px;width:103px;font-weight:bold;color:#000;">250,000</span><span class="t r" style="left:646px;top:476px;width:103px;font-weight:bold;color:#000;">250,000</span><span class="t r" style="left:751px;top:476px;width:103px;font-weight:bold;color:#000;">250,000</span><div style="left:79px;top:491px;width:1408px;height:16px;background:#fff"></div><div style="left:79px;top:491px;width:1408px;height:1px;background:#aca383"></div><div style="left:79px;top:506px;width:1408px;height:1px;background:#aca383"></div><div style="left:79px;top:491px;width:1px;height:16px;background:#aca383"></div><div style="left:436px;top:491px;width:1px;height:16px;background:#aca383"></div><div style="left:541px;top:491px;width:1px;height:16px;background:#aca383"></div><div style="left:646px;top:491px;width:1px;height:16px;background:#aca383"></div><div style="left:751px;top:491px;width:1px;height:16px;background:#aca383"></div><div style="left:856px;top:491px;width:1px;height:16px;background:#aca383"></div><div style="left:961px;top:491px;width:1px;height:16px;background:#aca383"></div><div style="left:1066px;top:491px;width:1px;height:16px;background:#aca383"></div><div style="left:1171px;top:491px;width:1px;height:16px;background:#aca383"></div><div style="left:1276px;top:491px;width:1px;height:16px;background:#aca383"></div><div style="left:1381px;top:491px;width:1px;height:16px;background:#aca383"></div><div style="left:1486px;top:491px;width:1px;height:16px;background:#aca383"></div><span class="t r" style="left:436px;top:491px;width:103px;color:#000;">250,000</span><span class="t r" style="left:646px;top:491px;width:103px;color:#000;">250,000</span><div style="left:79px;top:506px;width:1408px;height:30px;background:#fff"></div><div style="left:79px;top:506px;width:1408px;height:1px;background:#aca383"></div><div style="left:79px;top:535px;width:1408px;height:1px;background:#aca383"></div><div style="left:79px;top:506px;width:1px;height:30px;background:#aca383"></div><div style="left:436px;top:506px;width:1px;height:30px;background:#aca383"></div><div style="left:541px;top:506px;width:1px;height:30px;background:#aca383"></div><div style="left:646px;top:506px;width:1px;height:30px;background:#aca383"></div><div style="left:751px;top:506px;width:1px;height:30px;background:#aca383"></div><div style="left:856px;top:506px;width:1px;height:30px;background:#aca383"></div><div style="left:961px;top:506px;width:1px;height:30px;background:#aca383"></div><div style="left:1066px;top:506px;width:1px;height:30px;background:#aca383"></div><div style="left:1171px;top:506px;width:1px;height:30px;background:#aca383"></div><div style="left:1276px;top:506px;width:1px;height:30px;background:#aca383"></div><div style="left:1381px;top:506px;width:1px;height:30px;background:#aca383"></div><div style="left:1486px;top:506px;width:1px;height:30px;background:#aca383"></div><span style="left:103px;top:505px;line-height:14.5px;white-space:nowrap;color:#000;">Приходный ордер на товары АД-00000001 от 19.01.2023<br>17:35:51</span><span class="t r" style="left:751px;top:506px;width:103px;color:#000;">250,000</span><div style="left:79px;top:565px;width:1408px;height:16px;background:#fff"></div><div style="left:79px;top:565px;width:1408px;height:1px;background:#aca383"></div><div style="left:79px;top:580px;width:1408px;height:1px;background:#aca383"></div><div style="left:79px;top:565px;width:1px;height:16px;background:#aca383"></div><div style="left:436px;top:565px;width:1px;height:16px;background:#aca383"></div><div style="left:541px;top:565px;width:1px;height:16px;background:#aca383"></div><div style="left:646px;top:565px;width:1px;height:16px;background:#aca383"></div><div style="left:751px;top:565px;width:1px;height:16px;background:#aca383"></div><div style="left:856px;top:565px;width:1px;height:16px;background:#aca383"></div><div style="left:961px;top:565px;width:1px;height:16px;background:#aca383"></div><div style="left:1066px;top:565px;width:1px;height:16px;background:#aca383"></div><div style="left:1171px;top:565px;width:1px;height:16px;background:#aca383"></div><div style="left:1276px;top:565px;width:1px;height:16px;background:#aca383"></div><div style="left:1381px;top:565px;width:1px;height:16px;background:#aca383"></div><div style="left:1486px;top:565px;width:1px;height:16px;background:#aca383"></div><span class="t" style="left:89px;top:565px;font-weight:bold;color:#000;">Склад №141</span><span class="t r" style="left:856px;top:565px;width:103px;font-weight:bold;color:#000;">572,000</span><span class="t r" style="left:961px;top:565px;width:103px;font-weight:bold;color:#000;">510,000</span><div style="left:79px;top:580px;width:1408px;height:16px;background:#fff"></div><div style="left:79px;top:580px;width:1408px;height:1px;background:#aca383"></div><div style="left:79px;top:595px;width:1408px;height:1px;background:#aca383"></div><div style="left:79px;top:580px;width:1px;height:16px;background:#aca383"></div><div style="left:436px;top:580px;width:1px;height:16px;background:#aca383"></div><div style="left:541px;top:580px;width:1px;height:16px;background:#aca383"></div><div style="left:646px;top:580px;width:1px;height:16px;background:#aca383"></div><div style="left:751px;top:580px;width:1px;height:16px;background:#aca383"></div><div style="left:856px;top:580px;width:1px;height:16px;background:#aca383"></div><div style="left:961px;top:580px;width:1px;height:16px;background:#aca383"></div><div style="left:1066px;top:580px;width:1px;height:16px;background:#aca383"></div><div style="left:1171px;top:580px;width:1px;height:16px;background:#aca383"></div><div style="left:1276px;top:580px;width:1px;height:16px;background:#aca383"></div><div style="left:1381px;top:580px;width:1px;height:16px;background:#aca383"></div><div style="left:1486px;top:580px;width:1px;height:16px;background:#aca383"></div><span class="t r" style="left:856px;top:580px;width:103px;font-weight:bold;color:#000;">572,000</span><span class="t r" style="left:961px;top:580px;width:103px;font-weight:bold;color:#000;">510,000</span><div style="left:79px;top:595px;width:1408px;height:30px;background:#fff"></div><div style="left:79px;top:595px;width:1408px;height:1px;background:#aca383"></div><div style="left:79px;top:624px;width:1408px;height:1px;background:#aca383"></div><div style="left:79px;top:595px;width:1px;height:30px;background:#aca383"></div><div style="left:436px;top:595px;width:1px;height:30px;background:#aca383"></div><div style="left:541px;top:595px;width:1px;height:30px;background:#aca383"></div><div style="left:646px;top:595px;width:1px;height:30px;background:#aca383"></div><div style="left:751px;top:595px;width:1px;height:30px;background:#aca383"></div><div style="left:856px;top:595px;width:1px;height:30px;background:#aca383"></div><div style="left:961px;top:595px;width:1px;height:30px;background:#aca383"></div><div style="left:1066px;top:595px;width:1px;height:30px;background:#aca383"></div><div style="left:1171px;top:595px;width:1px;height:30px;background:#aca383"></div><div style="left:1276px;top:595px;width:1px;height:30px;background:#aca383"></div><div style="left:1381px;top:595px;width:1px;height:30px;background:#aca383"></div><div style="left:1486px;top:595px;width:1px;height:30px;background:#aca383"></div><span style="left:103px;top:594px;line-height:14.5px;white-space:nowrap;color:#000;">Спецификация с поставщиком 00000000002 от 04.11.2021<br>14:54:54</span><span class="t r" style="left:856px;top:595px;width:103px;color:#000;">572,000</span><div style="left:79px;top:624px;width:1408px;height:16px;background:#fff"></div><div style="left:79px;top:624px;width:1408px;height:1px;background:#aca383"></div><div style="left:79px;top:639px;width:1408px;height:1px;background:#aca383"></div><div style="left:79px;top:624px;width:1px;height:16px;background:#aca383"></div><div style="left:436px;top:624px;width:1px;height:16px;background:#aca383"></div><div style="left:541px;top:624px;width:1px;height:16px;background:#aca383"></div><div style="left:646px;top:624px;width:1px;height:16px;background:#aca383"></div><div style="left:751px;top:624px;width:1px;height:16px;background:#aca383"></div><div style="left:856px;top:624px;width:1px;height:16px;background:#aca383"></div><div style="left:961px;top:624px;width:1px;height:16px;background:#aca383"></div><div style="left:1066px;top:624px;width:1px;height:16px;background:#aca383"></div><div style="left:1171px;top:624px;width:1px;height:16px;background:#aca383"></div><div style="left:1276px;top:624px;width:1px;height:16px;background:#aca383"></div><div style="left:1381px;top:624px;width:1px;height:16px;background:#aca383"></div><div style="left:1486px;top:624px;width:1px;height:16px;background:#aca383"></div><span class="t" style="left:103px;top:624px;color:#000;">Заказ поставщику АГ-00000030 от 31.01.2022 12:26:40</span><span class="t r" style="left:961px;top:624px;width:103px;color:#000;">510,000</span><div style="left:79px;top:639px;width:1408px;height:16px;background:#fff"></div><div style="left:79px;top:639px;width:1408px;height:1px;background:#aca383"></div><div style="left:79px;top:654px;width:1408px;height:1px;background:#aca383"></div><div style="left:79px;top:639px;width:1px;height:16px;background:#aca383"></div><div style="left:436px;top:639px;width:1px;height:16px;background:#aca383"></div><div style="left:541px;top:639px;width:1px;height:16px;background:#aca383"></div><div style="left:646px;top:639px;width:1px;height:16px;background:#aca383"></div><div style="left:751px;top:639px;width:1px;height:16px;background:#aca383"></div><div style="left:856px;top:639px;width:1px;height:16px;background:#aca383"></div><div style="left:961px;top:639px;width:1px;height:16px;background:#aca383"></div><div style="left:1066px;top:639px;width:1px;height:16px;background:#aca383"></div><div style="left:1171px;top:639px;width:1px;height:16px;background:#aca383"></div><div style="left:1276px;top:639px;width:1px;height:16px;background:#aca383"></div><div style="left:1381px;top:639px;width:1px;height:16px;background:#aca383"></div><div style="left:1486px;top:639px;width:1px;height:16px;background:#aca383"></div><span class="t" style="left:89px;top:639px;font-weight:bold;color:#000;">Склад №152</span><span class="t r" style="left:436px;top:639px;width:103px;font-weight:bold;color:#000;">27,000</span><span class="t r" style="left:646px;top:639px;width:103px;font-weight:bold;color:#000;">27,000</span><div style="left:79px;top:654px;width:1408px;height:16px;background:#fff"></div><div style="left:79px;top:654px;width:1408px;height:1px;background:#aca383"></div><div style="left:79px;top:669px;width:1408px;height:1px;background:#aca383"></div><div style="left:79px;top:654px;width:1px;height:16px;background:#aca383"></div><div style="left:436px;top:654px;width:1px;height:16px;background:#aca383"></div><div style="left:541px;top:654px;width:1px;height:16px;background:#aca383"></div><div style="left:646px;top:654px;width:1px;height:16px;background:#aca383"></div><div style="left:751px;top:654px;width:1px;height:16px;background:#aca383"></div><div style="left:856px;top:654px;width:1px;height:16px;background:#aca383"></div><div style="left:961px;top:654px;width:1px;height:16px;background:#aca383"></div><div style="left:1066px;top:654px;width:1px;height:16px;background:#aca383"></div><div style="left:1171px;top:654px;width:1px;height:16px;background:#aca383"></div><div style="left:1276px;top:654px;width:1px;height:16px;background:#aca383"></div><div style="left:1381px;top:654px;width:1px;height:16px;background:#aca383"></div><div style="left:1486px;top:654px;width:1px;height:16px;background:#aca383"></div><span class="t r" style="left:436px;top:654px;width:103px;font-weight:bold;color:#000;">27,000</span><span class="t r" style="left:646px;top:654px;width:103px;font-weight:bold;color:#000;">27,000</span><div style="left:79px;top:669px;width:1408px;height:16px;background:#fff"></div><div style="left:79px;top:669px;width:1408px;height:1px;background:#aca383"></div><div style="left:79px;top:684px;width:1408px;height:1px;background:#aca383"></div><div style="left:79px;top:669px;width:1px;height:16px;background:#aca383"></div><div style="left:436px;top:669px;width:1px;height:16px;background:#aca383"></div><div style="left:541px;top:669px;width:1px;height:16px;background:#aca383"></div><div style="left:646px;top:669px;width:1px;height:16px;background:#aca383"></div><div style="left:751px;top:669px;width:1px;height:16px;background:#aca383"></div><div style="left:856px;top:669px;width:1px;height:16px;background:#aca383"></div><div style="left:961px;top:669px;width:1px;height:16px;background:#aca383"></div><div style="left:1066px;top:669px;width:1px;height:16px;background:#aca383"></div><div style="left:1171px;top:669px;width:1px;height:16px;background:#aca383"></div><div style="left:1276px;top:669px;width:1px;height:16px;background:#aca383"></div><div style="left:1381px;top:669px;width:1px;height:16px;background:#aca383"></div><div style="left:1486px;top:669px;width:1px;height:16px;background:#aca383"></div><span class="t r" style="left:436px;top:669px;width:103px;color:#000;">27,000</span><span class="t r" style="left:646px;top:669px;width:103px;color:#000;">27,000</span><div style="left:79px;top:684px;width:1408px;height:16px;background:#fff"></div><div style="left:79px;top:684px;width:1408px;height:1px;background:#aca383"></div><div style="left:79px;top:699px;width:1408px;height:1px;background:#aca383"></div><div style="left:79px;top:684px;width:1px;height:16px;background:#aca383"></div><div style="left:436px;top:684px;width:1px;height:16px;background:#aca383"></div><div style="left:541px;top:684px;width:1px;height:16px;background:#aca383"></div><div style="left:646px;top:684px;width:1px;height:16px;background:#aca383"></div><div style="left:751px;top:684px;width:1px;height:16px;background:#aca383"></div><div style="left:856px;top:684px;width:1px;height:16px;background:#aca383"></div><div style="left:961px;top:684px;width:1px;height:16px;background:#aca383"></div><div style="left:1066px;top:684px;width:1px;height:16px;background:#aca383"></div><div style="left:1171px;top:684px;width:1px;height:16px;background:#aca383"></div><div style="left:1276px;top:684px;width:1px;height:16px;background:#aca383"></div><div style="left:1381px;top:684px;width:1px;height:16px;background:#aca383"></div><div style="left:1486px;top:684px;width:1px;height:16px;background:#aca383"></div><span class="t" style="left:89px;top:684px;font-weight:bold;color:#000;">Склад №177</span><span class="t r" style="left:436px;top:684px;width:103px;font-weight:bold;color:#000;">19,000</span><span class="t r" style="left:646px;top:684px;width:103px;font-weight:bold;color:#000;">19,000</span><div style="left:79px;top:699px;width:1408px;height:16px;background:#fff"></div><div style="left:79px;top:699px;width:1408px;height:1px;background:#aca383"></div><div style="left:79px;top:714px;width:1408px;height:1px;background:#aca383"></div><div style="left:79px;top:699px;width:1px;height:16px;background:#aca383"></div><div style="left:436px;top:699px;width:1px;height:16px;background:#aca383"></div><div style="left:541px;top:699px;width:1px;height:16px;background:#aca383"></div><div style="left:646px;top:699px;width:1px;height:16px;background:#aca383"></div><div style="left:751px;top:699px;width:1px;height:16px;background:#aca383"></div><div style="left:856px;top:699px;width:1px;height:16px;background:#aca383"></div><div style="left:961px;top:699px;width:1px;height:16px;background:#aca383"></div><div style="left:1066px;top:699px;width:1px;height:16px;background:#aca383"></div><div style="left:1171px;top:699px;width:1px;height:16px;background:#aca383"></div><div style="left:1276px;top:699px;width:1px;height:16px;background:#aca383"></div><div style="left:1381px;top:699px;width:1px;height:16px;background:#aca383"></div><div style="left:1486px;top:699px;width:1px;height:16px;background:#aca383"></div><span class="t r" style="left:436px;top:699px;width:103px;font-weight:bold;color:#000;">19,000</span><span class="t r" style="left:646px;top:699px;width:103px;font-weight:bold;color:#000;">19,000</span><div style="left:79px;top:714px;width:1408px;height:16px;background:#fff"></div><div style="left:79px;top:714px;width:1408px;height:1px;background:#aca383"></div><div style="left:79px;top:729px;width:1408px;height:1px;background:#aca383"></div><div style="left:79px;top:714px;width:1px;height:16px;background:#aca383"></div><div style="left:436px;top:714px;width:1px;height:16px;background:#aca383"></div><div style="left:541px;top:714px;width:1px;height:16px;background:#aca383"></div><div style="left:646px;top:714px;width:1px;height:16px;background:#aca383"></div><div style="left:751px;top:714px;width:1px;height:16px;background:#aca383"></div><div style="left:856px;top:714px;width:1px;height:16px;background:#aca383"></div><div style="left:961px;top:714px;width:1px;height:16px;background:#aca383"></div><div style="left:1066px;top:714px;width:1px;height:16px;background:#aca383"></div><div style="left:1171px;top:714px;width:1px;height:16px;background:#aca383"></div><div style="left:1276px;top:714px;width:1px;height:16px;background:#aca383"></div><div style="left:1381px;top:714px;width:1px;height:16px;background:#aca383"></div><div style="left:1486px;top:714px;width:1px;height:16px;background:#aca383"></div><span class="t r" style="left:436px;top:714px;width:103px;color:#000;">19,000</span><span class="t r" style="left:646px;top:714px;width:103px;color:#000;">19,000</span><div style="left:79px;top:729px;width:1408px;height:16px;background:#fff"></div><div style="left:79px;top:729px;width:1408px;height:1px;background:#aca383"></div><div style="left:79px;top:744px;width:1408px;height:1px;background:#aca383"></div><div style="left:79px;top:729px;width:1px;height:16px;background:#aca383"></div><div style="left:436px;top:729px;width:1px;height:16px;background:#aca383"></div><div style="left:541px;top:729px;width:1px;height:16px;background:#aca383"></div><div style="left:646px;top:729px;width:1px;height:16px;background:#aca383"></div><div style="left:751px;top:729px;width:1px;height:16px;background:#aca383"></div><div style="left:856px;top:729px;width:1px;height:16px;background:#aca383"></div><div style="left:961px;top:729px;width:1px;height:16px;background:#aca383"></div><div style="left:1066px;top:729px;width:1px;height:16px;background:#aca383"></div><div style="left:1171px;top:729px;width:1px;height:16px;background:#aca383"></div><div style="left:1276px;top:729px;width:1px;height:16px;background:#aca383"></div><div style="left:1381px;top:729px;width:1px;height:16px;background:#aca383"></div><div style="left:1486px;top:729px;width:1px;height:16px;background:#aca383"></div><span class="t" style="left:89px;top:729px;font-weight:bold;color:#000;">Склад №183</span><span class="t r" style="left:436px;top:729px;width:103px;font-weight:bold;color:#000;">215,000</span><span class="t r" style="left:646px;top:729px;width:103px;font-weight:bold;color:#000;">215,000</span><span class="t r" style="left:751px;top:729px;width:103px;font-weight:bold;color:#000;">70,000</span><span class="t r" style="left:1066px;top:729px;width:103px;font-weight:bold;color:#000;">50,000</span><span class="t r" style="left:1276px;top:729px;width:103px;font-weight:bold;color:#000;">10,000</span><span class="t r" style="left:1381px;top:729px;width:103px;font-weight:bold;color:#000;">50,000</span><div style="left:79px;top:744px;width:1408px;height:16px;background:#fff"></div><div style="left:79px;top:744px;width:1408px;height:1px;background:#aca383"></div><div style="left:79px;top:759px;width:1408px;height:1px;background:#aca383"></div><div style="left:79px;top:744px;width:1px;height:16px;background:#aca383"></div><div style="left:436px;top:744px;width:1px;height:16px;background:#aca383"></div><div style="left:541px;top:744px;width:1px;height:16px;background:#aca383"></div><div style="left:646px;top:744px;width:1px;height:16px;background:#aca383"></div><div style="left:751px;top:744px;width:1px;height:16px;background:#aca383"></div><div style="left:856px;top:744px;width:1px;height:16px;background:#aca383"></div><div style="left:961px;top:744px;width:1px;height:16px;background:#aca383"></div><div style="left:1066px;top:744px;width:1px;height:16px;background:#aca383"></div><div style="left:1171px;top:744px;width:1px;height:16px;background:#aca383"></div><div style="left:1276px;top:744px;width:1px;height:16px;background:#aca383"></div><div style="left:1381px;top:744px;width:1px;height:16px;background:#aca383"></div><div style="left:1486px;top:744px;width:1px;height:16px;background:#aca383"></div><span class="t r" style="left:436px;top:744px;width:103px;font-weight:bold;color:#000;">215,000</span><span class="t r" style="left:646px;top:744px;width:103px;font-weight:bold;color:#000;">215,000</span><span class="t r" style="left:751px;top:744px;width:103px;font-weight:bold;color:#000;">70,000</span><div style="left:79px;top:759px;width:1408px;height:16px;background:#fff"></div><div style="left:79px;top:759px;width:1408px;height:1px;background:#aca383"></div><div style="left:79px;top:774px;width:1408px;height:1px;background:#aca383"></div><div style="left:79px;top:759px;width:1px;height:16px;background:#aca383"></div><div style="left:436px;top:759px;width:1px;height:16px;background:#aca383"></div><div style="left:541px;top:759px;width:1px;height:16px;background:#aca383"></div><div style="left:646px;top:759px;width:1px;height:16px;background:#aca383"></div><div style="left:751px;top:759px;width:1px;height:16px;background:#aca383"></div><div style="left:856px;top:759px;width:1px;height:16px;background:#aca383"></div><div style="left:961px;top:759px;width:1px;height:16px;background:#aca383"></div><div style="left:1066px;top:759px;width:1px;height:16px;background:#aca383"></div><div style="left:1171px;top:759px;width:1px;height:16px;background:#aca383"></div><div style="left:1276px;top:759px;width:1px;height:16px;background:#aca383"></div><div style="left:1381px;top:759px;width:1px;height:16px;background:#aca383"></div><div style="left:1486px;top:759px;width:1px;height:16px;background:#aca383"></div><span class="t r" style="left:436px;top:759px;width:103px;color:#000;">215,000</span><span class="t r" style="left:646px;top:759px;width:103px;color:#000;">215,000</span><div style="left:79px;top:774px;width:1408px;height:30px;background:#fff"></div><div style="left:79px;top:774px;width:1408px;height:1px;background:#aca383"></div><div style="left:79px;top:803px;width:1408px;height:1px;background:#aca383"></div><div style="left:79px;top:774px;width:1px;height:30px;background:#aca383"></div><div style="left:436px;top:774px;width:1px;height:30px;background:#aca383"></div><div style="left:541px;top:774px;width:1px;height:30px;background:#aca383"></div><div style="left:646px;top:774px;width:1px;height:30px;background:#aca383"></div><div style="left:751px;top:774px;width:1px;height:30px;background:#aca383"></div><div style="left:856px;top:774px;width:1px;height:30px;background:#aca383"></div><div style="left:961px;top:774px;width:1px;height:30px;background:#aca383"></div><div style="left:1066px;top:774px;width:1px;height:30px;background:#aca383"></div><div style="left:1171px;top:774px;width:1px;height:30px;background:#aca383"></div><div style="left:1276px;top:774px;width:1px;height:30px;background:#aca383"></div><div style="left:1381px;top:774px;width:1px;height:30px;background:#aca383"></div><div style="left:1486px;top:774px;width:1px;height:30px;background:#aca383"></div><span style="left:103px;top:773px;line-height:14.5px;white-space:nowrap;color:#000;">Приходный ордер на товары АД-00000002 от 25.01.2023<br>16:12:18</span><span class="t r" style="left:751px;top:774px;width:103px;color:#000;">70,000</span><div style="left:79px;top:833px;width:1408px;height:16px;background:#fff"></div><div style="left:79px;top:833px;width:1408px;height:1px;background:#aca383"></div><div style="left:79px;top:848px;width:1408px;height:1px;background:#aca383"></div><div style="left:79px;top:833px;width:1px;height:16px;background:#aca383"></div><div style="left:436px;top:833px;width:1px;height:16px;background:#aca383"></div><div style="left:541px;top:833px;width:1px;height:16px;background:#aca383"></div><div style="left:646px;top:833px;width:1px;height:16px;background:#aca383"></div><div style="left:751px;top:833px;width:1px;height:16px;background:#aca383"></div><div style="left:856px;top:833px;width:1px;height:16px;background:#aca383"></div><div style="left:961px;top:833px;width:1px;height:16px;background:#aca383"></div><div style="left:1066px;top:833px;width:1px;height:16px;background:#aca383"></div><div style="left:1171px;top:833px;width:1px;height:16px;background:#aca383"></div><div style="left:1276px;top:833px;width:1px;height:16px;background:#aca383"></div><div style="left:1381px;top:833px;width:1px;height:16px;background:#aca383"></div><div style="left:1486px;top:833px;width:1px;height:16px;background:#aca383"></div><span class="t" style="left:89px;top:833px;font-weight:bold;color:#000;">Склад №202</span><span class="t r" style="left:436px;top:833px;width:103px;font-weight:bold;color:#000;">239,000</span><span class="t r" style="left:541px;top:833px;width:103px;font-weight:bold;color:#000;">81,000</span><span class="t r" style="left:646px;top:833px;width:103px;font-weight:bold;color:#000;">158,000</span><span class="t r" style="left:1066px;top:833px;width:103px;font-weight:bold;color:#000;">31,000</span><span class="t r" style="left:1276px;top:833px;width:103px;font-weight:bold;color:#000;">31,000</span><span class="t r" style="left:1381px;top:833px;width:103px;font-weight:bold;color:#000;">31,000</span><div style="left:79px;top:848px;width:1408px;height:16px;background:#fff"></div><div style="left:79px;top:848px;width:1408px;height:1px;background:#aca383"></div><div style="left:79px;top:863px;width:1408px;height:1px;background:#aca383"></div><div style="left:79px;top:848px;width:1px;height:16px;background:#aca383"></div><div style="left:436px;top:848px;width:1px;height:16px;background:#aca383"></div><div style="left:541px;top:848px;width:1px;height:16px;background:#aca383"></div><div style="left:646px;top:848px;width:1px;height:16px;background:#aca383"></div><div style="left:751px;top:848px;width:1px;height:16px;background:#aca383"></div><div style="left:856px;top:848px;width:1px;height:16px;background:#aca383"></div><div style="left:961px;top:848px;width:1px;height:16px;background:#aca383"></div><div style="left:1066px;top:848px;width:1px;height:16px;background:#aca383"></div><div style="left:1171px;top:848px;width:1px;height:16px;background:#aca383"></div><div style="left:1276px;top:848px;width:1px;height:16px;background:#aca383"></div><div style="left:1381px;top:848px;width:1px;height:16px;background:#aca383"></div><div style="left:1486px;top:848px;width:1px;height:16px;background:#aca383"></div><span class="t r" style="left:436px;top:848px;width:103px;font-weight:bold;color:#000;">239,000</span><span class="t r" style="left:541px;top:848px;width:103px;font-weight:bold;color:#000;">81,000</span><span class="t r" style="left:646px;top:848px;width:103px;font-weight:bold;color:#000;">158,000</span><div style="left:79px;top:863px;width:1408px;height:16px;background:#fff"></div><div style="left:79px;top:863px;width:1408px;height:1px;background:#aca383"></div><div style="left:79px;top:878px;width:1408px;height:1px;background:#aca383"></div><div style="left:79px;top:863px;width:1px;height:16px;background:#aca383"></div><div style="left:436px;top:863px;width:1px;height:16px;background:#aca383"></div><div style="left:541px;top:863px;width:1px;height:16px;background:#aca383"></div><div style="left:646px;top:863px;width:1px;height:16px;background:#aca383"></div><div style="left:751px;top:863px;width:1px;height:16px;background:#aca383"></div><div style="left:856px;top:863px;width:1px;height:16px;background:#aca383"></div><div style="left:961px;top:863px;width:1px;height:16px;background:#aca383"></div><div style="left:1066px;top:863px;width:1px;height:16px;background:#aca383"></div><div style="left:1171px;top:863px;width:1px;height:16px;background:#aca383"></div><div style="left:1276px;top:863px;width:1px;height:16px;background:#aca383"></div><div style="left:1381px;top:863px;width:1px;height:16px;background:#aca383"></div><div style="left:1486px;top:863px;width:1px;height:16px;background:#aca383"></div><span class="t r" style="left:436px;top:863px;width:103px;color:#000;">239,000</span><span class="t r" style="left:646px;top:863px;width:103px;color:#000;">239,000</span><div style="left:79px;top:878px;width:1408px;height:16px;background:#fff"></div><div style="left:79px;top:878px;width:1408px;height:1px;background:#aca383"></div><div style="left:79px;top:893px;width:1408px;height:1px;background:#aca383"></div><div style="left:79px;top:878px;width:1px;height:16px;background:#aca383"></div><div style="left:436px;top:878px;width:1px;height:16px;background:#aca383"></div><div style="left:541px;top:878px;width:1px;height:16px;background:#aca383"></div><div style="left:646px;top:878px;width:1px;height:16px;background:#aca383"></div><div style="left:751px;top:878px;width:1px;height:16px;background:#aca383"></div><div style="left:856px;top:878px;width:1px;height:16px;background:#aca383"></div><div style="left:961px;top:878px;width:1px;height:16px;background:#aca383"></div><div style="left:1066px;top:878px;width:1px;height:16px;background:#aca383"></div><div style="left:1171px;top:878px;width:1px;height:16px;background:#aca383"></div><div style="left:1276px;top:878px;width:1px;height:16px;background:#aca383"></div><div style="left:1381px;top:878px;width:1px;height:16px;background:#aca383"></div><div style="left:1486px;top:878px;width:1px;height:16px;background:#aca383"></div><span class="t" style="left:103px;top:878px;color:#000;">Заказ покупателя АГ-00001027 от 13.12.2022 14:22:31</span><span class="t r" style="left:541px;top:878px;width:103px;color:#000;">31,000</span><span class="t r" style="left:646px;top:878px;width:103px;color:#e00000;">-31,000</span><div style="left:79px;top:893px;width:1408px;height:16px;background:#fff"></div><div style="left:79px;top:893px;width:1408px;height:1px;background:#aca383"></div><div style="left:79px;top:908px;width:1408px;height:1px;background:#aca383"></div><div style="left:79px;top:893px;width:1px;height:16px;background:#aca383"></div><div style="left:436px;top:893px;width:1px;height:16px;background:#aca383"></div><div style="left:541px;top:893px;width:1px;height:16px;background:#aca383"></div><div style="left:646px;top:893px;width:1px;height:16px;background:#aca383"></div><div style="left:751px;top:893px;width:1px;height:16px;background:#aca383"></div><div style="left:856px;top:893px;width:1px;height:16px;background:#aca383"></div><div style="left:961px;top:893px;width:1px;height:16px;background:#aca383"></div><div style="left:1066px;top:893px;width:1px;height:16px;background:#aca383"></div><div style="left:1171px;top:893px;width:1px;height:16px;background:#aca383"></div><div style="left:1276px;top:893px;width:1px;height:16px;background:#aca383"></div><div style="left:1381px;top:893px;width:1px;height:16px;background:#aca383"></div><div style="left:1486px;top:893px;width:1px;height:16px;background:#aca383"></div><span class="t" style="left:103px;top:893px;color:#000;">Заказ покупателя АГ-00000006 от 12.01.2023 12:09:06</span><span class="t r" style="left:541px;top:893px;width:103px;color:#000;">50,000</span><span class="t r" style="left:646px;top:893px;width:103px;color:#e00000;">-50,000</span><div style="left:79px;top:945px;width:1408px;height:16px;background:#f4f0dd"></div><div style="left:79px;top:945px;width:1408px;height:1px;background:#aca383"></div><div style="left:79px;top:960px;width:1408px;height:1px;background:#aca383"></div><div style="left:79px;top:945px;width:1px;height:16px;background:#aca383"></div><div style="left:436px;top:945px;width:1px;height:16px;background:#aca383"></div><div style="left:541px;top:945px;width:1px;height:16px;background:#aca383"></div><div style="left:646px;top:945px;width:1px;height:16px;background:#aca383"></div><div style="left:751px;top:945px;width:1px;height:16px;background:#aca383"></div><div style="left:856px;top:945px;width:1px;height:16px;background:#aca383"></div><div style="left:961px;top:945px;width:1px;height:16px;background:#aca383"></div><div style="left:1066px;top:945px;width:1px;height:16px;background:#aca383"></div><div style="left:1171px;top:945px;width:1px;height:16px;background:#aca383"></div><div style="left:1276px;top:945px;width:1px;height:16px;background:#aca383"></div><div style="left:1381px;top:945px;width:1px;height:16px;background:#aca383"></div><div style="left:1486px;top:945px;width:1px;height:16px;background:#aca383"></div><span class="t" style="left:82px;top:945px;color:#4a3200;-webkit-text-stroke:0.35px #4a3200;">Итог</span><span class="t r" style="left:436px;top:945px;width:103px;color:#4a3200;-webkit-text-stroke:0.35px #4a3200;">796,000</span><span class="t r" style="left:541px;top:945px;width:103px;color:#4a3200;-webkit-text-stroke:0.35px #4a3200;">81,000</span><span class="t r" style="left:646px;top:945px;width:103px;color:#4a3200;-webkit-text-stroke:0.35px #4a3200;">715,000</span><span class="t r" style="left:751px;top:945px;width:103px;color:#4a3200;-webkit-text-stroke:0.35px #4a3200;">320,000</span><span class="t r" style="left:856px;top:945px;width:103px;color:#4a3200;-webkit-text-stroke:0.35px #4a3200;">572,000</span><span class="t r" style="left:961px;top:945px;width:103px;color:#4a3200;-webkit-text-stroke:0.35px #4a3200;">510,000</span><span class="t r" style="left:1066px;top:945px;width:103px;color:#4a3200;-webkit-text-stroke:0.35px #4a3200;">112,000</span><span class="t r" style="left:1171px;top:945px;width:103px;color:#4a3200;-webkit-text-stroke:0.35px #4a3200;">50,000</span><span class="t r" style="left:1276px;top:945px;width:103px;color:#4a3200;-webkit-text-stroke:0.35px #4a3200;">53,500</span><span class="t r" style="left:1381px;top:945px;width:103px;color:#4a3200;-webkit-text-stroke:0.35px #4a3200;">93,500</span><div style="left:78px;top:352px;width:1411px;height:38px;background:#74b6fd;border-radius:2px"></div><div style="left:82px;top:356px;width:1403px;height:30px;background:#fff"></div><div style="left:80px;top:390px;width:1407px;height:1px;background:rgba(60,70,80,0.5)"></div><div style="left:82px;top:371px;width:1403px;height:1px;background:#aca383"></div><div style="left:436px;top:356px;width:1px;height:30px;background:#aca383"></div><div style="left:541px;top:356px;width:1px;height:30px;background:#aca383"></div><div style="left:646px;top:356px;width:1px;height:30px;background:#aca383"></div><div style="left:751px;top:356px;width:1px;height:30px;background:#aca383"></div><div style="left:856px;top:356px;width:1px;height:30px;background:#aca383"></div><div style="left:961px;top:356px;width:1px;height:30px;background:#aca383"></div><div style="left:1066px;top:356px;width:1px;height:30px;background:#aca383"></div><div style="left:1171px;top:356px;width:1px;height:30px;background:#aca383"></div><div style="left:1276px;top:356px;width:1px;height:30px;background:#aca383"></div><div style="left:1381px;top:356px;width:1px;height:30px;background:#aca383"></div><div style="left:82px;top:356px;width:1403px;height:1px;background:#5a5a5a"></div><span class="t" style="left:96px;top:356px;font-weight:bold;color:#000;">Контрагент №10324</span><span class="t" style="left:103px;top:371px;color:#000;">Спецификация 00000001136 от 13.12.2022 14:38:57</span><span class="t r" style="left:1171px;top:356px;width:103px;font-weight:bold;color:#000;">50,000</span><span class="t r" style="left:1171px;top:371px;width:103px;color:#000;">50,000</span><div style="left:76px;top:427px;width:1413px;height:39px;background:#74b6fd;border-radius:2px"></div><div style="left:80px;top:431px;width:1405px;height:31px;background:#fff"></div><div style="left:78px;top:466px;width:1409px;height:1px;background:rgba(60,70,80,0.5)"></div><div style="left:80px;top:446px;width:1405px;height:1px;background:#aca383"></div><div style="left:436px;top:431px;width:1px;height:31px;background:#aca383"></div><div style="left:541px;top:431px;width:1px;height:31px;background:#aca383"></div><div style="left:646px;top:431px;width:1px;height:31px;background:#aca383"></div><div style="left:751px;top:431px;width:1px;height:31px;background:#aca383"></div><div style="left:856px;top:431px;width:1px;height:31px;background:#aca383"></div><div style="left:961px;top:431px;width:1px;height:31px;background:#aca383"></div><div style="left:1066px;top:431px;width:1px;height:31px;background:#aca383"></div><div style="left:1171px;top:431px;width:1px;height:31px;background:#aca383"></div><div style="left:1276px;top:431px;width:1px;height:31px;background:#aca383"></div><div style="left:1381px;top:431px;width:1px;height:31px;background:#aca383"></div><div style="left:80px;top:431px;width:1405px;height:1px;background:#5a5a5a"></div><span class="t" style="left:96px;top:431px;font-weight:bold;color:#000;">Контрагент №927</span><span class="t" style="left:103px;top:446px;color:#000;">Спецификация 00000001122 от 02.12.2022 12:52:38</span><span class="t r" style="left:1066px;top:431px;width:103px;font-weight:bold;color:#000;">6,000</span><span class="t r" style="left:1066px;top:446px;width:103px;color:#000;">6,000</span><div style="left:77px;top:533px;width:1412px;height:37px;background:#74b6fd;border-radius:2px"></div><div style="left:81px;top:537px;width:1404px;height:29px;background:#fff"></div><div style="left:79px;top:570px;width:1408px;height:1px;background:rgba(60,70,80,0.5)"></div><div style="left:81px;top:550px;width:1404px;height:1px;background:#aca383"></div><div style="left:436px;top:537px;width:1px;height:29px;background:#aca383"></div><div style="left:541px;top:537px;width:1px;height:29px;background:#aca383"></div><div style="left:646px;top:537px;width:1px;height:29px;background:#aca383"></div><div style="left:751px;top:537px;width:1px;height:29px;background:#aca383"></div><div style="left:856px;top:537px;width:1px;height:29px;background:#aca383"></div><div style="left:961px;top:537px;width:1px;height:29px;background:#aca383"></div><div style="left:1066px;top:537px;width:1px;height:29px;background:#aca383"></div><div style="left:1171px;top:537px;width:1px;height:29px;background:#aca383"></div><div style="left:1276px;top:537px;width:1px;height:29px;background:#aca383"></div><div style="left:1381px;top:537px;width:1px;height:29px;background:#aca383"></div><div style="left:81px;top:537px;width:1404px;height:1px;background:#5a5a5a"></div><span class="t" style="left:96px;top:535px;font-weight:bold;color:#000;">Контрагент №427</span><span class="t" style="left:103px;top:550px;color:#000;">Спецификация 00000001141 от 19.12.2022 13:00:10</span><span class="t r" style="left:1066px;top:535px;width:103px;font-weight:bold;color:#000;">25,000</span><span class="t r" style="left:1276px;top:535px;width:103px;font-weight:bold;color:#000;">12,500</span><span class="t r" style="left:1381px;top:535px;width:103px;font-weight:bold;color:#000;">12,500</span><span class="t r" style="left:1066px;top:550px;width:103px;color:#000;">25,000</span><span class="t r" style="left:1276px;top:550px;width:103px;color:#000;">12,500</span><span class="t r" style="left:1381px;top:550px;width:103px;color:#000;">12,500</span><div style="left:75px;top:800px;width:1414px;height:37px;background:#74b6fd;border-radius:2px"></div><div style="left:79px;top:804px;width:1406px;height:29px;background:#fff"></div><div style="left:77px;top:837px;width:1410px;height:1px;background:rgba(60,70,80,0.5)"></div><div style="left:79px;top:818px;width:1406px;height:1px;background:#aca383"></div><div style="left:436px;top:804px;width:1px;height:29px;background:#aca383"></div><div style="left:541px;top:804px;width:1px;height:29px;background:#aca383"></div><div style="left:646px;top:804px;width:1px;height:29px;background:#aca383"></div><div style="left:751px;top:804px;width:1px;height:29px;background:#aca383"></div><div style="left:856px;top:804px;width:1px;height:29px;background:#aca383"></div><div style="left:961px;top:804px;width:1px;height:29px;background:#aca383"></div><div style="left:1066px;top:804px;width:1px;height:29px;background:#aca383"></div><div style="left:1171px;top:804px;width:1px;height:29px;background:#aca383"></div><div style="left:1276px;top:804px;width:1px;height:29px;background:#aca383"></div><div style="left:1381px;top:804px;width:1px;height:29px;background:#aca383"></div><div style="left:79px;top:804px;width:1406px;height:1px;background:#5a5a5a"></div><span class="t" style="left:96px;top:803px;font-weight:bold;color:#000;">Контрагент №10756</span><span class="t" style="left:103px;top:818px;color:#000;">Спецификация 00000000005 от 09.01.2023 14:15:38</span><span class="t r" style="left:1066px;top:803px;width:103px;font-weight:bold;color:#000;">50,000</span><span class="t r" style="left:1276px;top:803px;width:103px;font-weight:bold;color:#000;">10,000</span><span class="t r" style="left:1381px;top:803px;width:103px;font-weight:bold;color:#000;">50,000</span><span class="t r" style="left:1066px;top:818px;width:103px;color:#000;">50,000</span><span class="t r" style="left:1276px;top:818px;width:103px;color:#000;">10,000</span><span class="t r" style="left:1381px;top:818px;width:103px;color:#000;">50,000</span><div style="left:77px;top:904px;width:1412px;height:37px;background:#74b6fd;border-radius:2px"></div><div style="left:81px;top:908px;width:1404px;height:29px;background:#fff"></div><div style="left:79px;top:941px;width:1408px;height:1px;background:rgba(60,70,80,0.5)"></div><div style="left:81px;top:923px;width:1404px;height:1px;background:#aca383"></div><div style="left:436px;top:908px;width:1px;height:29px;background:#aca383"></div><div style="left:541px;top:908px;width:1px;height:29px;background:#aca383"></div><div style="left:646px;top:908px;width:1px;height:29px;background:#aca383"></div><div style="left:751px;top:908px;width:1px;height:29px;background:#aca383"></div><div style="left:856px;top:908px;width:1px;height:29px;background:#aca383"></div><div style="left:961px;top:908px;width:1px;height:29px;background:#aca383"></div><div style="left:1066px;top:908px;width:1px;height:29px;background:#aca383"></div><div style="left:1171px;top:908px;width:1px;height:29px;background:#aca383"></div><div style="left:1276px;top:908px;width:1px;height:29px;background:#aca383"></div><div style="left:1381px;top:908px;width:1px;height:29px;background:#aca383"></div><div style="left:81px;top:908px;width:1404px;height:1px;background:#5a5a5a"></div><span class="t" style="left:96px;top:908px;font-weight:bold;color:#000;">Контрагент №201</span><span class="t" style="left:103px;top:923px;color:#000;">Спецификация 00000001134 от 09.12.2022 11:16:27</span><span class="t r" style="left:1066px;top:908px;width:103px;font-weight:bold;color:#000;">31,000</span><span class="t r" style="left:1276px;top:908px;width:103px;font-weight:bold;color:#000;">31,000</span><span class="t r" style="left:1381px;top:908px;width:103px;font-weight:bold;color:#000;">31,000</span><span class="t r" style="left:1066px;top:923px;width:103px;color:#000;">31,000</span><span class="t r" style="left:1276px;top:923px;width:103px;color:#000;">31,000</span><span class="t r" style="left:1381px;top:923px;width:103px;color:#000;">31,000</span><div style="left:19px;top:309px;width:1px;height:630px;background:#aca383"></div><div style="left:19px;top:938px;width:5px;height:1px;background:#aca383"></div><div style="left:14px;top:299px;width:11px;height:11px;background:linear-gradient(180deg,#fffef8,#f6f1e0);border:1px solid #b8ae8a;border-radius:2px"></div><div style="left:16px;top:304px;width:7px;height:1px;background:#2e2000"></div><div style="left:16px;top:305px;width:7px;height:1px;background:rgba(46,32,0,0.25)"></div><div style="left:32px;top:324px;width:1px;height:63px;background:#aca383"></div><div style="left:32px;top:386px;width:5px;height:1px;background:#aca383"></div><div style="left:27px;top:314px;width:11px;height:11px;background:linear-gradient(180deg,#fffef8,#f6f1e0);border:1px solid #b8ae8a;border-radius:2px"></div><div style="left:29px;top:319px;width:7px;height:1px;background:#2e2000"></div><div style="left:29px;top:320px;width:7px;height:1px;background:rgba(46,32,0,0.25)"></div><div style="left:45px;top:339px;width:1px;height:18px;background:#aca383"></div><div style="left:45px;top:356px;width:5px;height:1px;background:#aca383"></div><div style="left:40px;top:329px;width:11px;height:11px;background:linear-gradient(180deg,#fffef8,#f6f1e0);border:1px solid #b8ae8a;border-radius:2px"></div><div style="left:42px;top:334px;width:7px;height:1px;background:#2e2000"></div><div style="left:42px;top:335px;width:7px;height:1px;background:rgba(46,32,0,0.25)"></div><div style="left:45px;top:369px;width:1px;height:18px;background:#aca383"></div><div style="left:45px;top:386px;width:5px;height:1px;background:#aca383"></div><div style="left:40px;top:359px;width:11px;height:11px;background:linear-gradient(180deg,#fffef8,#f6f1e0);border:1px solid #b8ae8a;border-radius:2px"></div><div style="left:42px;top:364px;width:7px;height:1px;background:#2e2000"></div><div style="left:42px;top:365px;width:7px;height:1px;background:rgba(46,32,0,0.25)"></div><div style="left:32px;top:399px;width:1px;height:63px;background:#aca383"></div><div style="left:32px;top:461px;width:5px;height:1px;background:#aca383"></div><div style="left:27px;top:389px;width:11px;height:11px;background:linear-gradient(180deg,#fffef8,#f6f1e0);border:1px solid #b8ae8a;border-radius:2px"></div><div style="left:29px;top:394px;width:7px;height:1px;background:#2e2000"></div><div style="left:29px;top:395px;width:7px;height:1px;background:rgba(46,32,0,0.25)"></div><div style="left:45px;top:414px;width:1px;height:18px;background:#aca383"></div><div style="left:45px;top:431px;width:5px;height:1px;background:#aca383"></div><div style="left:40px;top:404px;width:11px;height:11px;background:linear-gradient(180deg,#fffef8,#f6f1e0);border:1px solid #b8ae8a;border-radius:2px"></div><div style="left:42px;top:409px;width:7px;height:1px;background:#2e2000"></div><div style="left:42px;top:410px;width:7px;height:1px;background:rgba(46,32,0,0.25)"></div><div style="left:45px;top:444px;width:1px;height:18px;background:#aca383"></div><div style="left:45px;top:461px;width:5px;height:1px;background:#aca383"></div><div style="left:40px;top:434px;width:11px;height:11px;background:linear-gradient(180deg,#fffef8,#f6f1e0);border:1px solid #b8ae8a;border-radius:2px"></div><div style="left:42px;top:439px;width:7px;height:1px;background:#2e2000"></div><div style="left:42px;top:440px;width:7px;height:1px;background:rgba(46,32,0,0.25)"></div><div style="left:32px;top:474px;width:1px;height:92px;background:#aca383"></div><div style="left:32px;top:565px;width:5px;height:1px;background:#aca383"></div><div style="left:27px;top:464px;width:11px;height:11px;background:linear-gradient(180deg,#fffef8,#f6f1e0);border:1px solid #b8ae8a;border-radius:2px"></div><div style="left:29px;top:469px;width:7px;height:1px;background:#2e2000"></div><div style="left:29px;top:470px;width:7px;height:1px;background:rgba(46,32,0,0.25)"></div><div style="left:45px;top:489px;width:1px;height:47px;background:#aca383"></div><div style="left:45px;top:535px;width:5px;height:1px;background:#aca383"></div><div style="left:40px;top:479px;width:11px;height:11px;background:linear-gradient(180deg,#fffef8,#f6f1e0);border:1px solid #b8ae8a;border-radius:2px"></div><div style="left:42px;top:484px;width:7px;height:1px;background:#2e2000"></div><div style="left:42px;top:485px;width:7px;height:1px;background:rgba(46,32,0,0.25)"></div><div style="left:45px;top:548px;width:1px;height:18px;background:#aca383"></div><div style="left:45px;top:565px;width:5px;height:1px;background:#aca383"></div><div style="left:40px;top:538px;width:11px;height:11px;background:linear-gradient(180deg,#fffef8,#f6f1e0);border:1px solid #b8ae8a;border-radius:2px"></div><div style="left:42px;top:543px;width:7px;height:1px;background:#2e2000"></div><div style="left:42px;top:544px;width:7px;height:1px;background:rgba(46,32,0,0.25)"></div><div style="left:32px;top:578px;width:1px;height:62px;background:#aca383"></div><div style="left:32px;top:639px;width:5px;height:1px;background:#aca383"></div><div style="left:27px;top:568px;width:11px;height:11px;background:linear-gradient(180deg,#fffef8,#f6f1e0);border:1px solid #b8ae8a;border-radius:2px"></div><div style="left:29px;top:573px;width:7px;height:1px;background:#2e2000"></div><div style="left:29px;top:574px;width:7px;height:1px;background:rgba(46,32,0,0.25)"></div><div style="left:45px;top:593px;width:1px;height:47px;background:#aca383"></div><div style="left:45px;top:639px;width:5px;height:1px;background:#aca383"></div><div style="left:40px;top:583px;width:11px;height:11px;background:linear-gradient(180deg,#fffef8,#f6f1e0);border:1px solid #b8ae8a;border-radius:2px"></div><div style="left:42px;top:588px;width:7px;height:1px;background:#2e2000"></div><div style="left:42px;top:589px;width:7px;height:1px;background:rgba(46,32,0,0.25)"></div><div style="left:32px;top:652px;width:1px;height:33px;background:#aca383"></div><div style="left:32px;top:684px;width:5px;height:1px;background:#aca383"></div><div style="left:27px;top:642px;width:11px;height:11px;background:linear-gradient(180deg,#fffef8,#f6f1e0);border:1px solid #b8ae8a;border-radius:2px"></div><div style="left:29px;top:647px;width:7px;height:1px;background:#2e2000"></div><div style="left:29px;top:648px;width:7px;height:1px;background:rgba(46,32,0,0.25)"></div><div style="left:45px;top:667px;width:1px;height:18px;background:#aca383"></div><div style="left:45px;top:684px;width:5px;height:1px;background:#aca383"></div><div style="left:40px;top:657px;width:11px;height:11px;background:linear-gradient(180deg,#fffef8,#f6f1e0);border:1px solid #b8ae8a;border-radius:2px"></div><div style="left:42px;top:662px;width:7px;height:1px;background:#2e2000"></div><div style="left:42px;top:663px;width:7px;height:1px;background:rgba(46,32,0,0.25)"></div><div style="left:32px;top:697px;width:1px;height:33px;background:#aca383"></div><div style="left:32px;top:729px;width:5px;height:1px;background:#aca383"></div><div style="left:27px;top:687px;width:11px;height:11px;background:linear-gradient(180deg,#fffef8,#f6f1e0);border:1px solid #b8ae8a;border-radius:2px"></div><div style="left:29px;top:692px;width:7px;height:1px;background:#2e2000"></div><div style="left:29px;top:693px;width:7px;height:1px;background:rgba(46,32,0,0.25)"></div><div style="left:45px;top:712px;width:1px;height:18px;background:#aca383"></div><div style="left:45px;top:729px;width:5px;height:1px;background:#aca383"></div><div style="left:40px;top:702px;width:11px;height:11px;background:linear-gradient(180deg,#fffef8,#f6f1e0);border:1px solid #b8ae8a;border-radius:2px"></div><div style="left:42px;top:707px;width:7px;height:1px;background:#2e2000"></div><div style="left:42px;top:708px;width:7px;height:1px;background:rgba(46,32,0,0.25)"></div><div style="left:32px;top:742px;width:1px;height:92px;background:#aca383"></div><div style="left:32px;top:833px;width:5px;height:1px;background:#aca383"></div><div style="left:27px;top:732px;width:11px;height:11px;background:linear-gradient(180deg,#fffef8,#f6f1e0);border:1px solid #b8ae8a;border-radius:2px"></div><div style="left:29px;top:737px;width:7px;height:1px;background:#2e2000"></div><div style="left:29px;top:738px;width:7px;height:1px;background:rgba(46,32,0,0.25)"></div><div style="left:45px;top:757px;width:1px;height:47px;background:#aca383"></div><div style="left:45px;top:803px;width:5px;height:1px;background:#aca383"></div><div style="left:40px;top:747px;width:11px;height:11px;background:linear-gradient(180deg,#fffef8,#f6f1e0);border:1px solid #b8ae8a;border-radius:2px"></div><div style="left:42px;top:752px;width:7px;height:1px;background:#2e2000"></div><div style="left:42px;top:753px;width:7px;height:1px;background:rgba(46,32,0,0.25)"></div><div style="left:45px;top:816px;width:1px;height:18px;background:#aca383"></div><div style="left:45px;top:833px;width:5px;height:1px;background:#aca383"></div><div style="left:40px;top:806px;width:11px;height:11px;background:linear-gradient(180deg,#fffef8,#f6f1e0);border:1px solid #b8ae8a;border-radius:2px"></div><div style="left:42px;top:811px;width:7px;height:1px;background:#2e2000"></div><div style="left:42px;top:812px;width:7px;height:1px;background:rgba(46,32,0,0.25)"></div><div style="left:32px;top:846px;width:1px;height:93px;background:#aca383"></div><div style="left:32px;top:938px;width:5px;height:1px;background:#aca383"></div><div style="left:27px;top:836px;width:11px;height:11px;background:linear-gradient(180deg,#fffef8,#f6f1e0);border:1px solid #b8ae8a;border-radius:2px"></div><div style="left:29px;top:841px;width:7px;height:1px;background:#2e2000"></div><div style="left:29px;top:842px;width:7px;height:1px;background:rgba(46,32,0,0.25)"></div><div style="left:45px;top:861px;width:1px;height:48px;background:#aca383"></div><div style="left:45px;top:908px;width:5px;height:1px;background:#aca383"></div><div style="left:40px;top:851px;width:11px;height:11px;background:linear-gradient(180deg,#fffef8,#f6f1e0);border:1px solid #b8ae8a;border-radius:2px"></div><div style="left:42px;top:856px;width:7px;height:1px;background:#2e2000"></div><div style="left:42px;top:857px;width:7px;height:1px;background:rgba(46,32,0,0.25)"></div><div style="left:45px;top:921px;width:1px;height:18px;background:#aca383"></div><div style="left:45px;top:938px;width:5px;height:1px;background:#aca383"></div><div style="left:40px;top:911px;width:11px;height:11px;background:linear-gradient(180deg,#fffef8,#f6f1e0);border:1px solid #b8ae8a;border-radius:2px"></div><div style="left:42px;top:916px;width:7px;height:1px;background:#2e2000"></div><div style="left:42px;top:917px;width:7px;height:1px;background:rgba(46,32,0,0.25)"></div></div></body></html>
